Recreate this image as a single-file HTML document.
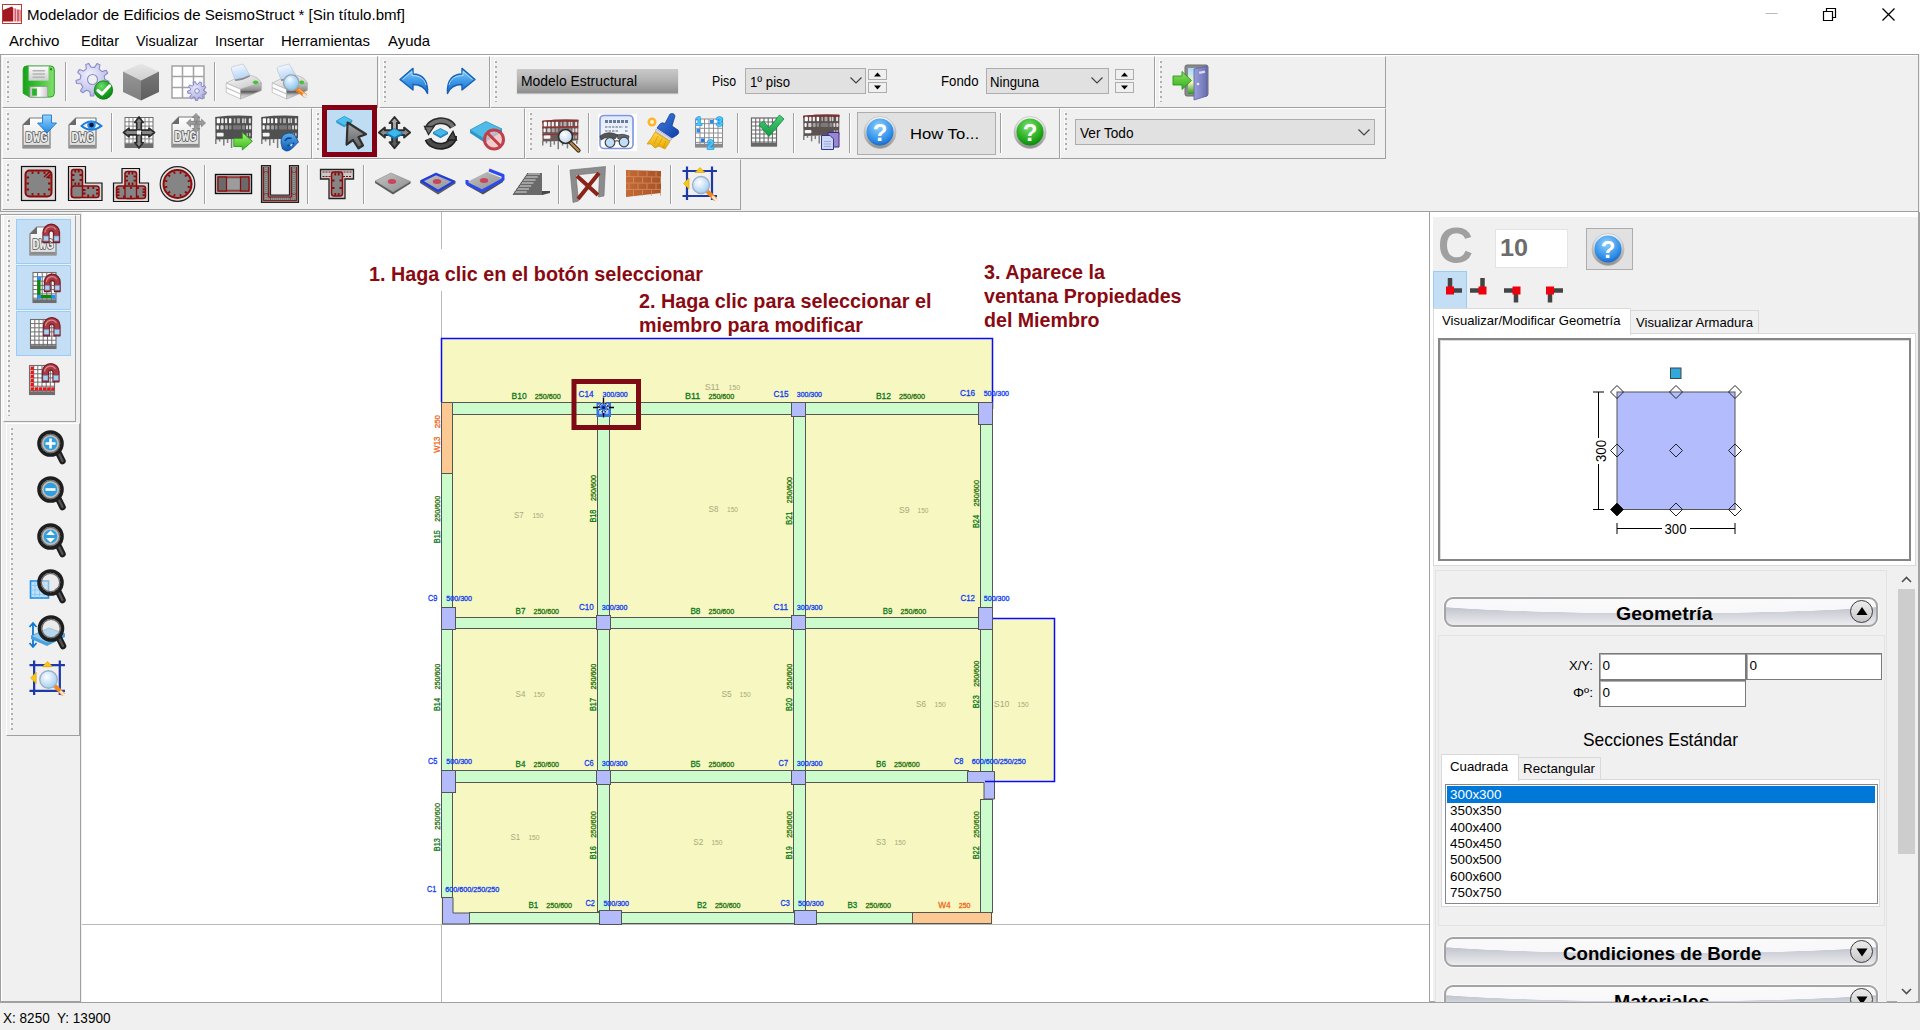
<!DOCTYPE html>
<html lang="es"><head><meta charset="utf-8"><title>Modelador de Edificios de SeismoStruct</title>
<style>
html,body{margin:0;padding:0;background:#f0f0f0;}
body{width:1920px;height:1030px;overflow:hidden;position:relative;font-family:"Liberation Sans",sans-serif;}
#app{position:absolute;left:0;top:0;width:1920px;height:1030px;overflow:hidden;background:#f0f0f0;}
.abs,.t,.band,.sep,.grip,.ico,.combo,.btn{position:absolute;}
.t{white-space:nowrap;line-height:1;transform-origin:0 50%;}
#titlebar{position:absolute;left:0;top:0;width:1920px;height:29px;background:#fff;}
#menubar{position:absolute;left:0;top:29px;width:1920px;height:25px;background:#fff;}
#dock{position:absolute;left:0;top:54px;width:1919px;box-shadow:inset 0 1px 0 #fff;height:158px;border-left:1px solid #a0a0a0;background:#f0f0f0;border-top:1px solid #a0a0a0;border-bottom:1px solid #a0a0a0;border-right:1px solid #a0a0a0;box-sizing:border-box;}
.band{box-sizing:border-box;border-right:1px solid #a0a0a0;border-bottom:1px solid #a0a0a0;border-top:1px solid #fff;border-left:1px solid #fff;background:#f0f0f0;}
.sep{width:1px;background:#a0a0a0;border-right:1px solid #fff;}
.grip{width:2px;background-image:repeating-linear-gradient(to bottom,#b0b0b0 0,#b0b0b0 2px,transparent 2px,transparent 5px);box-shadow:-1px -1px 0 rgba(255,255,255,.8);}
.ico{overflow:visible;}
.combo{box-sizing:border-box;background:#e1e1e1;border:1px solid #adadad;}
.btn{box-sizing:border-box;background:#e1e1e1;border:1px solid #adadad;}
.hl{position:absolute;box-sizing:border-box;background:#c4dff5;border:1px solid #98cdf8;}
.spin{position:absolute;box-sizing:border-box;background:#f0f0f0;border:1px solid #adadad;}
#leftdock{position:absolute;left:0;top:212px;width:82px;height:790px;background:#f0f0f0;}
#canvas{position:absolute;left:82px;top:212px;width:1347px;height:790px;background:#fff;}
#right{position:absolute;left:1429px;top:212px;width:491px;height:790px;background:#fff;box-sizing:border-box;border-left:1px solid #a0a0a0;border-right:2px solid #a4a4a4;border-bottom:1px solid #a8a8a8;}
#rightin{position:absolute;left:1433px;top:217px;width:485px;height:784px;background:#f0f0f0;}
#status{position:absolute;left:0;top:1002px;width:1920px;height:28px;background:#f0f0f0;border-top:1px solid #a0a0a0;box-sizing:border-box;}
.pill{position:absolute;box-sizing:border-box;border:2px solid #a4a4a4;border-radius:9px;background:radial-gradient(ellipse 62% 56% at 50% 0%,#fbfbfc 0,#f8f8fa 97%,rgba(248,248,250,0) 100%),linear-gradient(to bottom,#c9ccd4 0%,#bfc3cc 30%,#d6d8de 65%,#ececef 100%);box-shadow:0 0 0 1px #f8f8f8;}
.circ{position:absolute;box-sizing:border-box;width:23px;height:23px;border-radius:12px;border:1.5px solid #3c3c3c;background:linear-gradient(to bottom,#ececec 0%,#dcdcdc 50%,#c6c6c6 100%);}
.edit{position:absolute;box-sizing:border-box;background:#fff;border:1px solid #7a7a7a;box-shadow:inset 1px 1px 0 #b0b0b0;}
.tabp{position:absolute;box-sizing:border-box;background:#fff;border:1px solid #d9d9d9;}
.tabi{position:absolute;box-sizing:border-box;background:#f0f0f0;border:1px solid #d9d9d9;}
.tab {position:absolute;box-sizing:border-box;background:#fff;border:1px solid #d9d9d9;border-bottom:none;}
</style></head>
<body><div id="app">
<div id="titlebar">
<svg class="ico" style="left:2px;top:4px" width="20" height="20" viewBox="0 0 20 20"><rect x=".5" y=".5" width="19" height="19" fill="#fff" stroke="#b83a30"/><path d="M1 6L10 2.500L11 3.500V17.500H1Z" fill="#a11722"/><rect x="11" y="4" width="1.500" height="13.500" fill="#e8b0b4"/><rect x="12.500" y="4.500" width="1.500" height="13" fill="#d4606c"/><rect x="14" y="5" width="1" height="12.500" fill="#ecc0c4"/><rect x="15" y="5.500" width="2.500" height="12" fill="#d4606c"/><rect x="17.500" y="6" width="1.500" height="11.500" fill="#dc9096"/></svg>
<span class="t" style="left:27.0px;top:6.9px;font-size:15px;color:#000;transform:scaleX(1.0053);">Modelador de Edificios de SeismoStruct * [Sin título.bmf]</span>
<svg class="ico" style="left:1755px;top:0" width="165" height="29" viewBox="0 0 165 29"><path d="M10.5 13.5H22.5" stroke="#bbb" stroke-width="1"/><path d="M68.500 11.5H77.5V20.5H68.5Z M71.5 11.5V8.500H80.5V17.5H77.5" fill="none" stroke="#000" stroke-width="1.2"/><path d="M127.5 8.500L139.5 20.5M139.5 8.500L127.5 20.5" stroke="#000" stroke-width="1.3"/></svg>
</div>
<div id="menubar"></div><div class="abs" style="left:0;top:0;width:600px;height:54px">
<span class="t" style="left:9.0px;top:33.2px;font-size:15px;color:#000;transform:scaleX(1.0097);">Archivo</span>
<span class="t" style="left:81.0px;top:33.2px;font-size:15px;color:#000;transform:scaleX(0.9698);">Editar</span>
<span class="t" style="left:136.0px;top:33.2px;font-size:15px;color:#000;transform:scaleX(0.9575);">Visualizar</span>
<span class="t" style="left:215.0px;top:33.2px;font-size:15px;color:#000;transform:scaleX(0.9637);">Insertar</span>
<span class="t" style="left:281.0px;top:33.2px;font-size:15px;color:#000;transform:scaleX(0.9886);">Herramientas</span>
<span class="t" style="left:388.0px;top:33.2px;font-size:15px;color:#000;transform:scaleX(0.9939);">Ayuda</span>
</div>
<div id="dock"></div>
<div class="band" style="left:2px;top:56px;width:376px;height:52px"></div>
<div class="grip" style="left:7px;top:61px;height:41px"></div>
<div class="band" style="left:379px;top:56px;width:111px;height:52px"></div>
<div class="grip" style="left:384px;top:61px;height:41px"></div>
<div class="band" style="left:490px;top:56px;width:665px;height:52px"></div>
<div class="grip" style="left:495px;top:61px;height:41px"></div>
<div class="band" style="left:1155px;top:56px;width:231px;height:52px"></div>
<div class="grip" style="left:1160px;top:61px;height:41px"></div>
<div class="band" style="left:2px;top:108px;width:310px;height:51px"></div>
<div class="grip" style="left:7px;top:113px;height:40px"></div>
<div class="band" style="left:312px;top:108px;width:213px;height:51px"></div>
<div class="grip" style="left:317px;top:113px;height:40px"></div>
<div class="band" style="left:525px;top:108px;width:535px;height:51px"></div>
<div class="grip" style="left:530px;top:113px;height:40px"></div>
<div class="band" style="left:1060px;top:108px;width:326px;height:51px"></div>
<div class="grip" style="left:1065px;top:113px;height:40px"></div>
<div class="band" style="left:2px;top:159px;width:739px;height:51px"></div>
<div class="grip" style="left:7px;top:164px;height:40px"></div>
<svg class="ico" style="left:22px;top:65px" width="33.5" height="33" viewBox="0 0 35 35"><defs><linearGradient id="svg1" x1="0" y1="0" x2="1" y2="0"><stop offset="0" stop-color="#17a317"/><stop offset="0.5" stop-color="#3ec43a"/><stop offset="1" stop-color="#86de6e"/></linearGradient><linearGradient id="svg2" x1="0" y1="0" x2="0" y2="1"><stop offset="0" stop-color="#fdfdfd"/><stop offset="1" stop-color="#cfcfcf"/></linearGradient><linearGradient id="svg3" x1="0" y1="0" x2="1" y2="0"><stop offset="0" stop-color="#b9b9b9"/><stop offset="0.5" stop-color="#fff"/><stop offset="1" stop-color="#c9c9c9"/></linearGradient></defs><path d="M5 1H30Q34 1 34 5V30Q34 34 30 34H8L1 30V5Q1 1 5 1Z" fill="url(#svg1)" stroke="#1f9a1f" stroke-width="1"/><rect x="7" y="1.500" width="21" height="15" fill="url(#svg2)" stroke="#b8c8b8" stroke-width=".6"/><path d="M11 6H24M11 9.500H24M11 13H24" stroke="#b4b4b4" stroke-width="1.6"/><rect x="8" y="23" width="19" height="11" fill="url(#svg3)" stroke="#8a8a8a" stroke-width=".5"/><rect x="10.500" y="25" width="5" height="7.500" fill="#25b425"/><rect x="29.500" y="3.500" width="2" height="2" fill="#138a13"/></svg>
<svg class="ico" style="left:76px;top:63px" width="37" height="37" viewBox="0 0 37 37"><defs><radialGradient id="gc1" cx="0.4" cy="0.35" r="0.7"><stop offset="0" stop-color="#f0f0fc"/><stop offset="1" stop-color="#b4b4e4"/></radialGradient><radialGradient id="gc2" cx="0.4" cy="0.3" r="0.8"><stop offset="0" stop-color="#6fe06a"/><stop offset="0.6" stop-color="#18a020"/><stop offset="1" stop-color="#0b7f12"/></radialGradient></defs><path d="M28.8 16.5L32.9 18.2L32.3 21.3L27.8 21.3L25.9 24.4L28.0 28.4L25.5 30.3L22.1 27.4L18.6 28.6L17.7 33.0L14.5 32.9L13.8 28.5L10.4 27.2L6.8 29.8L4.5 27.8L6.7 23.9L4.9 20.7L0.5 20.5L0.0 17.4L4.2 15.9L4.9 12.3L1.7 9.3L3.3 6.6L7.5 8.1L10.3 5.8L9.8 1.4L12.7 0.4L15.0 4.3L18.6 4.4L21.0 0.6L23.9 1.8L23.2 6.2L25.9 8.6L30.2 7.3L31.7 10.0L28.2 12.9Z M21.5 16.5A5 5 0 1 0 11.5 16.5A5 5 0 1 0 21.5 16.5Z" fill="url(#gc1)" stroke="#8a8acc" stroke-width="1.1" fill-rule="evenodd" stroke-linejoin="round"/><circle cx="27.500" cy="27" r="9.200" fill="url(#gc2)" stroke="#0a7a10" stroke-width=".8"/><path d="M22 27.500L26 31L33.500 23" fill="none" stroke="#fff" stroke-width="3.200" stroke-linecap="round" stroke-linejoin="round"/></svg>
<svg class="ico" style="left:122px;top:63px" width="38" height="38" viewBox="0 0 38 38"><defs><linearGradient id="cb1" x1="0" y1="0" x2="0" y2="1"><stop offset="0" stop-color="#e6e6e6"/><stop offset="1" stop-color="#d0d0d0"/></linearGradient><linearGradient id="cb2" x1="0" y1="0" x2="0" y2="1"><stop offset="0" stop-color="#969696"/><stop offset="1" stop-color="#7e7e7e"/></linearGradient><linearGradient id="cb3" x1="0" y1="0" x2="0" y2="1"><stop offset="0" stop-color="#787878"/><stop offset="1" stop-color="#5e5e5e"/></linearGradient></defs><path d="M19 0.500L37 8.500L19 17.500L1 8.500Z" fill="url(#cb1)"/><path d="M1 8.500L19 17.500V37.500L1 29Z" fill="url(#cb2)"/><path d="M37 8.500L19 17.500V37.500L37 29Z" fill="url(#cb3)"/></svg>
<svg class="ico" style="left:170px;top:64px" width="37" height="37" viewBox="0 0 37 37"><defs><linearGradient id="gg1" x1="0" y1="0" x2="1" y2="1"><stop offset="0" stop-color="#ffffff"/><stop offset="0.6" stop-color="#ffffff"/><stop offset="1" stop-color="#d6d6fb"/></linearGradient><radialGradient id="gg2" cx="0.4" cy="0.35" r="0.7"><stop offset="0" stop-color="#e6e6fa"/><stop offset="1" stop-color="#a9a9dc"/></radialGradient></defs><rect x="2" y="2" width="32" height="32" fill="url(#gg1)" stroke="#a2a2a2" stroke-width="1.500"/><path d="M12.500 2V34M23.500 2V34M2 12.500H34M2 23.500H34" stroke="#a2a2a2" stroke-width="1.500"/><path d="M33.8 27.0L36.4 28.0L35.9 30.2L33.1 30.0L32.2 31.4L33.6 33.8L31.8 35.2L29.8 33.2L28.2 33.7L27.7 36.5L25.4 36.4L25.1 33.5L23.6 32.9L21.4 34.7L19.7 33.1L21.4 30.8L20.6 29.3L17.8 29.3L17.5 27.0L20.2 26.3L20.6 24.7L18.5 22.8L19.7 20.9L22.3 22.1L23.6 21.1L23.1 18.3L25.4 17.6L26.5 20.2L28.2 20.3L29.6 17.9L31.7 18.8L31.0 21.5L32.2 22.6L34.9 21.7L35.9 23.8L33.6 25.4Z M29.3 27.0A2.3 2.3 0 1 0 24.7 27.0A2.3 2.3 0 1 0 29.3 27.0Z" fill="url(#gg2)" stroke="#7f7fc4" stroke-width="0.9" fill-rule="evenodd" stroke-linejoin="round"/></svg>
<svg class="ico" style="left:225px;top:63px" width="38" height="38" viewBox="0 0 38 38"><defs><linearGradient id="paa" x1="0" y1="0" x2="0.3" y2="1"><stop offset="0" stop-color="#ffffff"/><stop offset="1" stop-color="#b4d4f8"/></linearGradient><linearGradient id="pba" x1="0" y1="0" x2="1" y2="1"><stop offset="0" stop-color="#fbfbfb"/><stop offset="1" stop-color="#c2c2c2"/></linearGradient><linearGradient id="pca" x1="0" y1="0" x2="0" y2="1"><stop offset="0" stop-color="#c9c9c9"/><stop offset="0.45" stop-color="#8d8d8d"/><stop offset="0.55" stop-color="#5a5a5a"/><stop offset="0.75" stop-color="#bdbdbd"/><stop offset="1" stop-color="#e4e4e4"/></linearGradient></defs><path d="M1.200 20L10.600 15.600L25 12.200Q34 14 36.300 20L15.600 26.300Z" fill="url(#pba)" stroke="#b4b4b4" stroke-width=".7"/><path d="M1.200 20L15.600 26.300V36L1.200 29.400Z" fill="#fdfdfd" stroke="#b4b4b4" stroke-width=".7"/><path d="M1.200 24.600L15.600 31" stroke="#c4c4c4" stroke-width="1.200"/><path d="M15.600 26.300L36.300 20V27.500L15.600 36Z" fill="url(#pca)" stroke="#a8a8a8" stroke-width=".7"/><path d="M10 16.800L6.500 7Q5.500 4 8 3.600L18 1Q21 5 24.700 12Q18 16 10 16.800Z" fill="url(#paa)" stroke="#b9c6d6" stroke-width=".7"/><path d="M9.800 16.500Q17 16 24.500 12.300L25 13.500Q18 17.500 10.200 18Z" fill="#8a8a8a"/><ellipse cx="30.600" cy="19.300" rx="2.700" ry="1.900" fill="#45c23a"/></svg>
<svg class="ico" style="left:271px;top:63px" width="38" height="38" viewBox="0 0 38 38"><defs><linearGradient id="pab" x1="0" y1="0" x2="0.3" y2="1"><stop offset="0" stop-color="#ffffff"/><stop offset="1" stop-color="#b4d4f8"/></linearGradient><linearGradient id="pbb" x1="0" y1="0" x2="1" y2="1"><stop offset="0" stop-color="#fbfbfb"/><stop offset="1" stop-color="#c2c2c2"/></linearGradient><linearGradient id="pcb" x1="0" y1="0" x2="0" y2="1"><stop offset="0" stop-color="#c9c9c9"/><stop offset="0.45" stop-color="#8d8d8d"/><stop offset="0.55" stop-color="#5a5a5a"/><stop offset="0.75" stop-color="#bdbdbd"/><stop offset="1" stop-color="#e4e4e4"/></linearGradient></defs><path d="M1.200 20L10.600 15.600L25 12.200Q34 14 36.300 20L15.600 26.300Z" fill="url(#pbb)" stroke="#b4b4b4" stroke-width=".7"/><path d="M1.200 20L15.600 26.300V36L1.200 29.400Z" fill="#fdfdfd" stroke="#b4b4b4" stroke-width=".7"/><path d="M1.200 24.600L15.600 31" stroke="#c4c4c4" stroke-width="1.200"/><path d="M15.600 26.300L36.300 20V27.500L15.600 36Z" fill="url(#pcb)" stroke="#a8a8a8" stroke-width=".7"/><path d="M10 16.800L6.500 7Q5.500 4 8 3.600L18 1Q21 5 24.700 12Q18 16 10 16.800Z" fill="url(#pab)" stroke="#b9c6d6" stroke-width=".7"/><path d="M9.800 16.500Q17 16 24.500 12.300L25 13.500Q18 17.500 10.200 18Z" fill="#8a8a8a"/><ellipse cx="30.600" cy="19.300" rx="2.700" ry="1.900" fill="#45c23a"/><defs><radialGradient id="pp1" cx="0.4" cy="0.3" r="0.75"><stop offset="0" stop-color="#f2faff"/><stop offset="0.5" stop-color="#b4dcf6"/><stop offset="1" stop-color="#84bce6"/></radialGradient></defs><path d="M26.500 26.500L34 32.500" stroke="#f07e1c" stroke-width="4.200" stroke-linecap="round"/><path d="M28 26.500L34.500 31.500" stroke="#fbb860" stroke-width="1.300" stroke-linecap="round"/><path d="M33 32L35.500 34" stroke="#e8e8e8" stroke-width="3" stroke-linecap="round"/><circle cx="20.300" cy="19.700" r="7.800" fill="url(#pp1)" stroke="#9aa4ae" stroke-width="1.300"/></svg>
<svg class="ico" style="left:398px;top:66px" width="32" height="29" viewBox="0 0 32 29"><defs><linearGradient id="un1" x1="0" y1="0" x2="0" y2="1"><stop offset="0" stop-color="#8fd0fa"/><stop offset="0.5" stop-color="#3f9ae8"/><stop offset="1" stop-color="#1668c8"/></linearGradient></defs><path d="M2 13.500L15 2.400V8C23 8 30.500 13 29.500 27.500C27 21 22 18.500 15 18.500V24Z" fill="url(#un1)" stroke="#1560b8" stroke-width="1.400" stroke-linejoin="round"/><path d="M4.500 13.500L14 5.500V9.500C21 9.500 26.500 12.500 28 19" fill="none" stroke="#bfe4fc" stroke-width="1" opacity=".8"/></svg>
<svg class="ico" style="left:445px;top:66px" width="32" height="29" viewBox="0 0 32 29"><g transform="translate(32,0) scale(-1,1)"><defs><linearGradient id="re1" x1="0" y1="0" x2="0" y2="1"><stop offset="0" stop-color="#8fd0fa"/><stop offset="0.5" stop-color="#3f9ae8"/><stop offset="1" stop-color="#1668c8"/></linearGradient></defs><path d="M2 13.500L15 2.400V8C23 8 30.500 13 29.500 27.500C27 21 22 18.500 15 18.500V24Z" fill="url(#re1)" stroke="#1560b8" stroke-width="1.400" stroke-linejoin="round"/><path d="M4.500 13.500L14 5.500V9.500C21 9.500 26.500 12.500 28 19" fill="none" stroke="#bfe4fc" stroke-width="1" opacity=".8"/></g></svg>
<svg class="ico" style="left:1172px;top:63px" width="38" height="38" viewBox="0 0 38 38"><defs><linearGradient id="ex1" x1="0" y1="0" x2="1" y2="0"><stop offset="0" stop-color="#9aa0d8"/><stop offset="1" stop-color="#6a6fb5"/></linearGradient><linearGradient id="ex2" x1="0" y1="0" x2="0" y2="1"><stop offset="0" stop-color="#8fe060"/><stop offset="1" stop-color="#2fae1c"/></linearGradient><linearGradient id="ex3" x1="0" y1="0" x2="0" y2="1"><stop offset="0" stop-color="#a6d8ff"/><stop offset="0.55" stop-color="#f4f8c0"/><stop offset="1" stop-color="#2f9a20"/></linearGradient></defs><rect x="13" y="2" width="23" height="31" rx="2" fill="#8a8a8a" stroke="#6e6e6e"/><rect x="16" y="5" width="10" height="26" fill="url(#ex3)"/><path d="M22 6L35 3V33L22 37Z" fill="url(#ex1)" stroke="#5a5fa5" stroke-width=".8"/><rect x="27" y="8" width="6" height="2.500" fill="#d8daf4" transform="rotate(-12 30 9)"/><circle cx="26" cy="21" r="1.300" fill="#e8e8ff"/><path d="M1 13H10V8.500L19.500 17.500L10 26.500V22H1Z" fill="url(#ex2)" stroke="#27961a" stroke-width=".9" stroke-linejoin="round"/></svg>
<div class="sep" style="left:65px;top:62px;height:39px"></div>
<div class="sep" style="left:214px;top:62px;height:39px"></div>
<div class="abs" style="left:517px;top:69px;width:161px;height:24px;background:linear-gradient(to bottom,#c9c9c9 0%,#b4b4b4 45%,#8e8e8e 100%);box-shadow:0 1px 1px #bbb"></div>
<span class="t" style="left:521.0px;top:73.6px;font-size:14px;color:#000;transform:scaleX(0.9939);">Modelo Estructural</span>
<span class="t" style="left:711.5px;top:74.1px;font-size:14px;color:#000;transform:scaleX(0.8812);">Piso</span>
<div class="combo" style="left:745px;top:68px;width:121px;height:26px"></div>
<span class="t" style="left:750.0px;top:75.1px;font-size:14px;color:#000;transform:scaleX(0.9418);">1º piso</span>
<svg class="ico" style="left:849px;top:76px" width="14" height="9" viewBox="0 0 14 9"><path d="M1.5 1.5L7 7L12.5 1.5" fill="none" stroke="#444" stroke-width="1.2"/></svg>
<div class="spin" style="left:868px;top:69px;width:19px;height:11px"></div><div class="spin" style="left:868px;top:82px;width:19px;height:11px"></div>
<svg class="ico" style="left:868px;top:69px" width="19" height="24" viewBox="0 0 19 24"><path d="M6 7.500L9.500 3.500L13 7.500Z M6 16.5L9.500 20.5L13 16.5Z" fill="#000"/></svg>
<span class="t" style="left:940.5px;top:74.1px;font-size:14px;color:#000;transform:scaleX(0.9448);">Fondo</span>
<div class="combo" style="left:986px;top:68px;width:123px;height:26px"></div>
<span class="t" style="left:990.0px;top:75.1px;font-size:14px;color:#000;transform:scaleX(0.9396);">Ninguna</span>
<svg class="ico" style="left:1090px;top:76px" width="14" height="9" viewBox="0 0 14 9"><path d="M1.5 1.5L7 7L12.5 1.5" fill="none" stroke="#444" stroke-width="1.2"/></svg>
<div class="spin" style="left:1115px;top:69px;width:19px;height:11px"></div><div class="spin" style="left:1115px;top:82px;width:19px;height:11px"></div>
<svg class="ico" style="left:1115px;top:69px" width="19" height="24" viewBox="0 0 19 24"><path d="M6 7.500L9.500 3.500L13 7.500Z M6 16.5L9.500 20.5L13 16.5Z" fill="#000"/></svg>
<svg class="ico" style="left:22px;top:114px" width="36" height="36" viewBox="0 0 36 36"><defs><linearGradient id="dwa" x1="0" y1="0" x2="0" y2="1"><stop offset="0" stop-color="#ffffff"/><stop offset="1" stop-color="#dcdcdc"/></linearGradient></defs><path d="M8 4H28V34H1V11Z" fill="url(#dwa)" stroke="#7a7a7a" stroke-width="1.200" stroke-linejoin="round"/><path d="M1 11L8 4V11Z" fill="#6a6a6a"/><path d="M1.6 32.3H27.4" stroke="#8c8c8c" stroke-width="2.800"/><text x="3.2" y="28" font-family="Liberation Mono, monospace" font-weight="bold" font-size="14" fill="#ececec" stroke="#555" stroke-width="1.500" paint-order="stroke" stroke-linejoin="round" textLength="22.5" lengthAdjust="spacingAndGlyphs">DWG</text><defs><linearGradient id="di1" x1="0" y1="0" x2="0" y2="1"><stop offset="0" stop-color="#9ad4fc"/><stop offset="1" stop-color="#1e88e5"/></linearGradient></defs><path d="M20.500 1H29.500V9H34.500L25 19L15.500 9H20.500Z" fill="url(#di1)" stroke="#1a78d0" stroke-width=".9" stroke-linejoin="round"/></svg>
<svg class="ico" style="left:68px;top:114px" width="36" height="36" viewBox="0 0 36 36"><defs><linearGradient id="dwb" x1="0" y1="0" x2="0" y2="1"><stop offset="0" stop-color="#ffffff"/><stop offset="1" stop-color="#dcdcdc"/></linearGradient></defs><path d="M8 4H28V34H1V11Z" fill="url(#dwb)" stroke="#7a7a7a" stroke-width="1.200" stroke-linejoin="round"/><path d="M1 11L8 4V11Z" fill="#6a6a6a"/><path d="M1.6 32.3H27.4" stroke="#8c8c8c" stroke-width="2.800"/><text x="3.2" y="28" font-family="Liberation Mono, monospace" font-weight="bold" font-size="14" fill="#ececec" stroke="#555" stroke-width="1.500" paint-order="stroke" stroke-linejoin="round" textLength="22.5" lengthAdjust="spacingAndGlyphs">DWG</text><path d="M13.500 12Q23 3 33.500 12Q23 19.500 13.500 12Z" fill="#eaf4ff" stroke="#1e7ad8" stroke-width="1.800"/><circle cx="23.500" cy="11" r="4.300" fill="#2a8de8"/><circle cx="23.500" cy="11" r="2.300" fill="#08153a"/></svg>
<svg class="ico" style="left:122px;top:115px" width="35" height="35" viewBox="0 0 35 35"><rect x="3" y="2.500" width="28" height="30" fill="#fff" stroke="#6e6e6e" stroke-width="1"/><path d="M7.0 2.500V32.500M11.0 2.500V32.500M15.0 2.500V32.500M19.0 2.500V32.500M23.0 2.500V32.500M27.0 2.500V32.500M3 6.8H31M3 11.1H31M3 15.3H31M3 19.6H31M3 23.9H31M3 28.2H31" stroke="#777" stroke-width=".9"/><path d="M3 30.500H31" stroke="#6e6e6e" stroke-width="4"/><path transform="rotate(0 17 17.5)" d="M14.7 17.5V7.5H12.8L17 2.0L21.2 7.5H19.3V17.5Z" fill="#868686" stroke="#2c2c2c" stroke-width="1.7" stroke-linejoin="round"/><path transform="rotate(90 17 17.5)" d="M14.7 17.5V7.5H12.8L17 2.0L21.2 7.5H19.3V17.5Z" fill="#868686" stroke="#2c2c2c" stroke-width="1.7" stroke-linejoin="round"/><path transform="rotate(180 17 17.5)" d="M14.7 17.5V7.5H12.8L17 2.0L21.2 7.5H19.3V17.5Z" fill="#868686" stroke="#2c2c2c" stroke-width="1.7" stroke-linejoin="round"/><path transform="rotate(270 17 17.5)" d="M14.7 17.5V7.5H12.8L17 2.0L21.2 7.5H19.3V17.5Z" fill="#868686" stroke="#2c2c2c" stroke-width="1.7" stroke-linejoin="round"/><rect x="15" y="15.500" width="4" height="4" fill="#f4f4f4"/></svg>
<svg class="ico" style="left:171px;top:113px" width="36" height="36" viewBox="0 0 36 36"><defs><linearGradient id="dwc" x1="0" y1="0" x2="0" y2="1"><stop offset="0" stop-color="#ffffff"/><stop offset="1" stop-color="#dcdcdc"/></linearGradient></defs><path d="M8 4H28V34H1V11Z" fill="url(#dwc)" stroke="#7a7a7a" stroke-width="1.200" stroke-linejoin="round"/><path d="M1 11L8 4V11Z" fill="#6a6a6a"/><path d="M1.6 32.3H27.4" stroke="#8c8c8c" stroke-width="2.800"/><text x="3.2" y="28" font-family="Liberation Mono, monospace" font-weight="bold" font-size="14" fill="#ececec" stroke="#555" stroke-width="1.500" paint-order="stroke" stroke-linejoin="round" textLength="22.5" lengthAdjust="spacingAndGlyphs">DWG</text><path transform="rotate(0 25 10)" d="M23.3 10V4.5H21.2L25 0.5L28.8 4.5H26.7V10Z" fill="#9a9a9a" stroke="#7a7a7a" stroke-width="0.7" stroke-linejoin="round"/><path transform="rotate(90 25 10)" d="M23.3 10V4.5H21.2L25 0.5L28.8 4.5H26.7V10Z" fill="#9a9a9a" stroke="#7a7a7a" stroke-width="0.7" stroke-linejoin="round"/><path transform="rotate(180 25 10)" d="M23.3 10V4.5H21.2L25 0.5L28.8 4.5H26.7V10Z" fill="#9a9a9a" stroke="#7a7a7a" stroke-width="0.7" stroke-linejoin="round"/><path transform="rotate(270 25 10)" d="M23.3 10V4.5H21.2L25 0.5L28.8 4.5H26.7V10Z" fill="#9a9a9a" stroke="#7a7a7a" stroke-width="0.7" stroke-linejoin="round"/></svg>
<svg class="ico" style="left:214px;top:114px" width="39" height="37" viewBox="0 0 39 37"><path d="M1.200 3Q20 0.800 38.200 2L38 24.500L1.500 25.500Z" fill="#505050"/><rect x="2.8" y="4.200" width="3.2" height="5" rx=".8" fill="#fff" opacity="1"/><rect x="7.2" y="4.200" width="2.4" height="5" rx=".8" fill="#fff" opacity="0.9"/><rect x="11" y="4.200" width="2.2" height="5" rx=".8" fill="#fff" opacity="0.9"/><rect x="15" y="4.200" width="2.4" height="5" rx=".8" fill="#fff" opacity="1"/><rect x="19.8" y="4.200" width="1.6" height="5" rx=".8" fill="#fff" opacity="0.55"/><rect x="23" y="4.200" width="3" height="5" rx=".8" fill="#fff" opacity="0.5"/><rect x="28" y="4.200" width="1.8" height="5" rx=".8" fill="#fff" opacity="0.7"/><rect x="30.5" y="4.200" width="1.6" height="5" rx=".8" fill="#fff" opacity="0.75"/><rect x="34.8" y="4.200" width="2" height="5" rx=".8" fill="#fff" opacity="0.85"/><rect x="2.6" y="11.200" width="2.2" height="4.300" rx=".8" fill="#fff" opacity="1"/><rect x="6.4" y="11.200" width="3.2" height="4.300" rx=".8" fill="#fff" opacity="0.75"/><rect x="11" y="11.200" width="3" height="4.300" rx=".8" fill="#fff" opacity="0.45"/><rect x="15" y="11.200" width="2.5" height="4.300" rx=".8" fill="#fff" opacity="0.35"/><rect x="19" y="11.200" width="8" height="4.300" rx=".8" fill="#fff" opacity="0.22"/><rect x="28" y="11.200" width="3" height="4.300" rx=".8" fill="#fff" opacity="0.3"/><rect x="32" y="11.200" width="2" height="4.300" rx=".8" fill="#fff" opacity="0.75"/><rect x="35" y="11.200" width="2.2" height="4.300" rx=".8" fill="#fff" opacity="0.8"/><rect x="2.8" y="18.800" width="6.8" height="3.800" rx=".8" fill="#fff" opacity="0.95"/><rect x="32.5" y="18.800" width="1.5" height="3.800" rx=".8" fill="#fff" opacity="0.5"/><rect x="35" y="18.800" width="1.6" height="3.800" rx=".8" fill="#fff" opacity="0.6"/><path d="M1.8 25V30" stroke="#6a6a6a" stroke-width="1.500" opacity=".85"/><path d="M5.6 25V27.5" stroke="#6a6a6a" stroke-width="1.500" opacity=".85"/><path d="M9.8 25V31.5" stroke="#6a6a6a" stroke-width="1.500" opacity=".85"/><path d="M13.6 25V29" stroke="#6a6a6a" stroke-width="1.500" opacity=".85"/><path d="M17.6 25V34" stroke="#6a6a6a" stroke-width="1.500" opacity=".85"/><path d="M22 25V30" stroke="#6a6a6a" stroke-width="1.500" opacity=".85"/><path d="M27 25V33" stroke="#6a6a6a" stroke-width="1.500" opacity=".85"/><path d="M31 25V29" stroke="#6a6a6a" stroke-width="1.500" opacity=".85"/><path d="M36.5 25V28" stroke="#6a6a6a" stroke-width="1.500" opacity=".85"/><defs><linearGradient id="ba1" x1="0" y1="0" x2="0" y2="1"><stop offset="0" stop-color="#a4f470"/><stop offset="1" stop-color="#35b81c"/></linearGradient></defs><path d="M19.800 24.500H28.300V18.500L38.400 27.300L28.300 36V32.500H19.800Z" fill="url(#ba1)" stroke="#28a018" stroke-width=".9" stroke-linejoin="round"/></svg>
<svg class="ico" style="left:260px;top:114px" width="40" height="38" viewBox="0 0 40 38"><path d="M1.200 3Q20 0.800 38.200 2L38 24.500L1.500 25.500Z" fill="#505050"/><rect x="2.8" y="4.200" width="3.2" height="5" rx=".8" fill="#fff" opacity="1"/><rect x="7.2" y="4.200" width="2.4" height="5" rx=".8" fill="#fff" opacity="0.9"/><rect x="11" y="4.200" width="2.2" height="5" rx=".8" fill="#fff" opacity="0.9"/><rect x="15" y="4.200" width="2.4" height="5" rx=".8" fill="#fff" opacity="1"/><rect x="19.8" y="4.200" width="1.6" height="5" rx=".8" fill="#fff" opacity="0.55"/><rect x="23" y="4.200" width="3" height="5" rx=".8" fill="#fff" opacity="0.5"/><rect x="28" y="4.200" width="1.8" height="5" rx=".8" fill="#fff" opacity="0.7"/><rect x="30.5" y="4.200" width="1.6" height="5" rx=".8" fill="#fff" opacity="0.75"/><rect x="34.8" y="4.200" width="2" height="5" rx=".8" fill="#fff" opacity="0.85"/><rect x="2.6" y="11.200" width="2.2" height="4.300" rx=".8" fill="#fff" opacity="1"/><rect x="6.4" y="11.200" width="3.2" height="4.300" rx=".8" fill="#fff" opacity="0.75"/><rect x="11" y="11.200" width="3" height="4.300" rx=".8" fill="#fff" opacity="0.45"/><rect x="15" y="11.200" width="2.5" height="4.300" rx=".8" fill="#fff" opacity="0.35"/><rect x="19" y="11.200" width="8" height="4.300" rx=".8" fill="#fff" opacity="0.22"/><rect x="28" y="11.200" width="3" height="4.300" rx=".8" fill="#fff" opacity="0.3"/><rect x="32" y="11.200" width="2" height="4.300" rx=".8" fill="#fff" opacity="0.75"/><rect x="35" y="11.200" width="2.2" height="4.300" rx=".8" fill="#fff" opacity="0.8"/><rect x="2.8" y="18.800" width="6.8" height="3.800" rx=".8" fill="#fff" opacity="0.95"/><rect x="32.5" y="18.800" width="1.5" height="3.800" rx=".8" fill="#fff" opacity="0.5"/><rect x="35" y="18.800" width="1.6" height="3.800" rx=".8" fill="#fff" opacity="0.6"/><path d="M1.8 25V30" stroke="#6a6a6a" stroke-width="1.500" opacity=".85"/><path d="M5.6 25V27.5" stroke="#6a6a6a" stroke-width="1.500" opacity=".85"/><path d="M9.8 25V31.5" stroke="#6a6a6a" stroke-width="1.500" opacity=".85"/><path d="M13.6 25V29" stroke="#6a6a6a" stroke-width="1.500" opacity=".85"/><path d="M17.6 25V34" stroke="#6a6a6a" stroke-width="1.500" opacity=".85"/><path d="M22 25V30" stroke="#6a6a6a" stroke-width="1.500" opacity=".85"/><path d="M27 25V33" stroke="#6a6a6a" stroke-width="1.500" opacity=".85"/><path d="M31 25V29" stroke="#6a6a6a" stroke-width="1.500" opacity=".85"/><path d="M36.5 25V28" stroke="#6a6a6a" stroke-width="1.500" opacity=".85"/><defs><linearGradient id="br1" x1="0" y1="0" x2="0" y2="1"><stop offset="0" stop-color="#5ab0f0"/><stop offset="1" stop-color="#0d58b0"/></linearGradient></defs><path d="M21 29Q20 20 29 19Q35 19 36.500 24.500L38.500 28L35.500 31Q30 37.500 26 37L22.500 35Z" fill="url(#br1)" stroke="#0c4a9c" stroke-width=".8"/><path d="M25 27Q27 23 31.500 24.500M34 29Q31 32 27.500 31.500" fill="none" stroke="#0a3f8a" stroke-width="1.600"/><path d="M29.500 31L33 29.500L31.500 32.500Z" fill="#d8ecff"/></svg>
<svg class="ico" style="left:378px;top:116px" width="33" height="34" viewBox="0 0 33 34"><path transform="rotate(0 16.5 16.6)" d="M14.1 16.6V7.000000000000002H11.5L16.5 1.0000000000000018L21.5 7.000000000000002H18.9V16.6Z" fill="#a8a8a8" stroke="#2e2e2e" stroke-width="1.9" stroke-linejoin="round"/><path transform="rotate(90 16.5 16.6)" d="M14.1 16.6V7.000000000000002H11.5L16.5 1.0000000000000018L21.5 7.000000000000002H18.9V16.6Z" fill="#8a8a8a" stroke="#2e2e2e" stroke-width="1.9" stroke-linejoin="round"/><path transform="rotate(180 16.5 16.6)" d="M14.1 16.6V7.000000000000002H11.5L16.5 1.0000000000000018L21.5 7.000000000000002H18.9V16.6Z" fill="#5c5c5c" stroke="#2e2e2e" stroke-width="1.9" stroke-linejoin="round"/><path transform="rotate(270 16.5 16.6)" d="M14.1 16.6V7.000000000000002H11.5L16.5 1.0000000000000018L21.5 7.000000000000002H18.9V16.6Z" fill="#8a8a8a" stroke="#2e2e2e" stroke-width="1.9" stroke-linejoin="round"/><path d="M8.500 17L16.500 12.600L24.500 17L16.500 21.400Z" fill="#3cb8ee" stroke="#1a80b8" stroke-width=".8"/><path d="M8.500 17L16.500 21.400L24.500 17V18.800L16.500 23.400L8.500 18.800Z" fill="#1479ae"/></svg>
<svg class="ico" style="left:424px;top:116px" width="33" height="34" viewBox="0 0 33 34"><path d="M4 14A13 10 0 0 1 29 11" fill="none" stroke="#2a2a2a" stroke-width="7"/><path d="M4 14A13 10 0 0 1 29 11" fill="none" stroke="#727272" stroke-width="3.800"/><path d="M0.500 10.500L10 10.500L4.500 18.500Z" fill="#727272" stroke="#2a2a2a" stroke-width="1.300"/><path d="M29.500 20A13 10 0 0 1 4 23" fill="none" stroke="#1e1e1e" stroke-width="7"/><path d="M29.500 20A13 10 0 0 1 4 23" fill="none" stroke="#4a4a4a" stroke-width="3.800"/><path d="M32.500 24L23.500 24L29 15.500Z" fill="#4a4a4a" stroke="#1e1e1e" stroke-width="1.300"/><path d="M9 16.500L16.500 12.500L24 16.500L16.500 20.500Z" fill="#45b8ea" stroke="#1a80b8" stroke-width=".8"/><path d="M9 16.500L16.500 20.500L24 16.500V18L16.500 22.200L9 18Z" fill="#1e86bd"/></svg>
<svg class="ico" style="left:469px;top:120px" width="36" height="31" viewBox="0 0 36 31"><path d="M1 10L17 1.500L33 9L15.500 19Z" fill="#4fbbe8" stroke="#2a8fc0" stroke-width=".8"/><path d="M1 10L15.500 19L33 9V12L15.500 22.500L1 13Z" fill="#2f95c8"/><circle cx="25" cy="19.500" r="9.500" fill="#f2c0c0" fill-opacity=".75" stroke="#c0404a" stroke-width="3"/><path d="M18.500 13L31.500 26" stroke="#c0404a" stroke-width="3"/></svg>
<svg class="ico" style="left:541px;top:117px" width="40" height="36" viewBox="0 0 40 36"><g transform="translate(0,1) scale(.98,.92)"><path d="M1.200 3Q20 0.800 38.200 2L38 24.500L1.500 25.500Z" fill="#6a5a5a"/><path d="M1.200 3Q20 0.800 38.200 2V4.500Q20 3.300 1.200 5.500Z" fill="#8a3434"/><rect x="2.8" y="4.200" width="3.2" height="5" rx=".8" fill="#fff" opacity="1"/><rect x="7.2" y="4.200" width="2.4" height="5" rx=".8" fill="#fff" opacity="0.9"/><rect x="11" y="4.200" width="2.2" height="5" rx=".8" fill="#fff" opacity="0.9"/><rect x="15" y="4.200" width="2.4" height="5" rx=".8" fill="#fff" opacity="1"/><rect x="19.8" y="4.200" width="1.6" height="5" rx=".8" fill="#fff" opacity="0.55"/><rect x="23" y="4.200" width="3" height="5" rx=".8" fill="#fff" opacity="0.5"/><rect x="28" y="4.200" width="1.8" height="5" rx=".8" fill="#fff" opacity="0.7"/><rect x="30.5" y="4.200" width="1.6" height="5" rx=".8" fill="#fff" opacity="0.75"/><rect x="34.8" y="4.200" width="2" height="5" rx=".8" fill="#fff" opacity="0.85"/><rect x="2.6" y="11.200" width="2.2" height="4.300" rx=".8" fill="#fff" opacity="1"/><rect x="6.4" y="11.200" width="3.2" height="4.300" rx=".8" fill="#fff" opacity="0.75"/><rect x="11" y="11.200" width="3" height="4.300" rx=".8" fill="#fff" opacity="0.45"/><rect x="15" y="11.200" width="2.5" height="4.300" rx=".8" fill="#fff" opacity="0.35"/><rect x="19" y="11.200" width="8" height="4.300" rx=".8" fill="#fff" opacity="0.22"/><rect x="28" y="11.200" width="3" height="4.300" rx=".8" fill="#fff" opacity="0.3"/><rect x="32" y="11.200" width="2" height="4.300" rx=".8" fill="#fff" opacity="0.75"/><rect x="35" y="11.200" width="2.2" height="4.300" rx=".8" fill="#fff" opacity="0.8"/><rect x="2.8" y="18.800" width="6.8" height="3.800" rx=".8" fill="#fff" opacity="0.95"/><rect x="32.5" y="18.800" width="1.5" height="3.800" rx=".8" fill="#fff" opacity="0.5"/><rect x="35" y="18.800" width="1.6" height="3.800" rx=".8" fill="#fff" opacity="0.6"/><path d="M1.8 25V30" stroke="#6a6a6a" stroke-width="1.500" opacity=".85"/><path d="M5.6 25V27.5" stroke="#6a6a6a" stroke-width="1.500" opacity=".85"/><path d="M9.8 25V31.5" stroke="#6a6a6a" stroke-width="1.500" opacity=".85"/><path d="M13.6 25V29" stroke="#6a6a6a" stroke-width="1.500" opacity=".85"/><path d="M17.6 25V34" stroke="#6a6a6a" stroke-width="1.500" opacity=".85"/><path d="M22 25V30" stroke="#6a6a6a" stroke-width="1.500" opacity=".85"/><path d="M27 25V33" stroke="#6a6a6a" stroke-width="1.500" opacity=".85"/><path d="M31 25V29" stroke="#6a6a6a" stroke-width="1.500" opacity=".85"/><path d="M36.5 25V28" stroke="#6a6a6a" stroke-width="1.500" opacity=".85"/><path d="M1.300 10.500L38 9.500M1.400 18L38 17" stroke="#9a3030" stroke-width="1.400"/></g><defs><radialGradient id="bs1" cx="0.4" cy="0.35" r="0.7"><stop offset="0" stop-color="#ffffff"/><stop offset="1" stop-color="#bcd2e6"/></radialGradient></defs><path d="M29 25L37.500 33.500" stroke="#2a2a2a" stroke-width="4.200" stroke-linecap="round"/><path d="M30 26L37.500 33.500" stroke="#c08a3a" stroke-width="2.400" stroke-linecap="round"/><circle cx="24.500" cy="19.500" r="7" fill="url(#bs1)" stroke="#303030" stroke-width="1.700"/></svg>
<svg class="ico" style="left:598px;top:114px" width="39" height="37" viewBox="0 0 39 37"><rect x="0" y="0" width="39" height="37" fill="#fff"/><defs><linearGradient id="dg1" x1="0" y1="0" x2="0" y2="1"><stop offset="0" stop-color="#dfe9fb"/><stop offset="1" stop-color="#ffffff"/></linearGradient></defs><rect x="2" y="1.500" width="33" height="33" rx="4" fill="url(#dg1)" stroke="#7d95e0" stroke-width="1.600"/><path d="M7 7.500H30" stroke="#6a7a98" stroke-width="3.200" stroke-dasharray="3 1"/><path d="M7 13H25M27 13H30M7 17H20M27 17H30" stroke="#8a94a8" stroke-width="1.600" stroke-dasharray="2.500 1"/><path d="M2 22Q10 16 20 21L17 25Q10 21 3 26Z" fill="#555" stroke="#333" stroke-width=".7"/><path d="M19 21Q25 19 31 22L30 26Q25 23 20 25Z" fill="#666" stroke="#333" stroke-width=".7"/><circle cx="12" cy="28.500" r="4.800" fill="#bfdcf8" stroke="#444" stroke-width="1.200"/><circle cx="26" cy="28" r="4.800" fill="#bfdcf8" stroke="#444" stroke-width="1.200"/><path d="M16.500 27.500Q19 26 21.500 27.500" fill="none" stroke="#444" stroke-width="1.200"/></svg>
<svg class="ico" style="left:646px;top:113px" width="34" height="37" viewBox="0 0 34 37"><defs><linearGradient id="bm1" x1="0" y1="0" x2="0" y2="1"><stop offset="0" stop-color="#ffd84a"/><stop offset="1" stop-color="#e8a800"/></linearGradient><linearGradient id="bm2" x1="0" y1="0" x2="1" y2="1"><stop offset="0" stop-color="#3f7fe0"/><stop offset="1" stop-color="#0f3fa8"/></linearGradient></defs><path d="M24 1Q28 -0.500 29 3L26 13L32 17Q34 20 31 22L26 25L11 15L14 11Q16 9 19 10.500Z" fill="url(#bm2)" stroke="#0d3590" stroke-width=".7"/><path d="M10 16L26 26L24 28L9.500 18.500Z" fill="#d9d9e4" stroke="#9a9aae" stroke-width=".6"/><path d="M9 19L24 28.500L19 36L13 33L9 35L5 31L1 31Q6 25 9 19Z" fill="url(#bm1)" stroke="#d09400" stroke-width=".7"/><path d="M12 23L8 31M16 25.500L12 33M20 28L17 35" stroke="#d09a10" stroke-width=".8"/><circle cx="6" cy="9" r="4.500" fill="#ffb52a"/><circle cx="6" cy="9" r="2" fill="#fff6d8"/></svg>
<svg class="ico" style="left:694px;top:113px" width="34" height="37" viewBox="0 0 34 37"><rect x="1.500" y="6" width="27" height="28" fill="#fff" stroke="#8a8a8a" stroke-width="1"/><path d="M6.0 6V34M10.5 6V34M15.0 6V34M19.5 6V34M24.0 6V34M1.500 10.7H28.500M1.500 15.3H28.500M1.500 20.0H28.500M1.500 24.7H28.500M1.500 29.4H28.500" stroke="#8f8f8f" stroke-width="1"/><path d="M1.500 32.500H28.500" stroke="#8a8a8a" stroke-width="3.500"/><rect x="2.500" y="16" width="3.500" height="3.500" fill="#2a8cf0"/><rect x="7" y="25.500" width="3.500" height="3.500" fill="#1a78e8"/><rect x="16" y="7" width="3.500" height="3.500" fill="#2a8cf0"/><text x="1.5" y="12" font-family="Liberation Sans, sans-serif" font-weight="bold" font-size="11" fill="#5cc8f8" stroke="#18a0e8" stroke-width="1.600" paint-order="stroke">1</text><text x="22" y="12.5" font-family="Liberation Sans, sans-serif" font-weight="bold" font-size="12" fill="#5cc8f8" stroke="#18a0e8" stroke-width="1.600" paint-order="stroke">3</text><text x="13" y="36" font-family="Liberation Sans, sans-serif" font-weight="bold" font-size="12" fill="#5cc8f8" stroke="#18a0e8" stroke-width="1.600" paint-order="stroke">2</text></svg>
<svg class="ico" style="left:750px;top:114px" width="35" height="35" viewBox="0 0 35 35"><rect x="1.500" y="4" width="25" height="28" fill="#fff" stroke="#666" stroke-width="1.200"/><path d="M5.7 4V32M9.8 4V32M14.0 4V32M18.2 4V32M22.4 4V32M1.500 8.0H26.500M1.500 12.0H26.500M1.500 16.0H26.500M1.500 20.0H26.500M1.500 24.0H26.500M1.500 28.0H26.500" stroke="#6a6a6a" stroke-width="1.100"/><path d="M1.500 30.500H26.500" stroke="#666" stroke-width="3.500"/><defs><linearGradient id="cg1" x1="0" y1="0" x2="0" y2="1"><stop offset="0" stop-color="#4ccf7a"/><stop offset="1" stop-color="#119a42"/></linearGradient></defs><path d="M9 11L13.500 7L19 14L29.500 1L34 5L19 22.500Z" fill="url(#cg1)" stroke="#0f8a3a" stroke-width=".8" stroke-linejoin="round"/></svg>
<svg class="ico" style="left:802px;top:113px" width="40" height="37" viewBox="0 0 40 37"><g transform="scale(.98,.9)"><path d="M1.200 3Q20 0.800 38.200 2L38 24.500L1.500 25.500Z" fill="#5c5252"/><path d="M1.200 3Q20 0.800 38.200 2V4.500Q20 3.300 1.200 5.500Z" fill="#7e3030"/><rect x="2.8" y="4.200" width="3.2" height="5" rx=".8" fill="#fff" opacity="1"/><rect x="7.2" y="4.200" width="2.4" height="5" rx=".8" fill="#fff" opacity="0.9"/><rect x="11" y="4.200" width="2.2" height="5" rx=".8" fill="#fff" opacity="0.9"/><rect x="15" y="4.200" width="2.4" height="5" rx=".8" fill="#fff" opacity="1"/><rect x="19.8" y="4.200" width="1.6" height="5" rx=".8" fill="#fff" opacity="0.55"/><rect x="23" y="4.200" width="3" height="5" rx=".8" fill="#fff" opacity="0.5"/><rect x="28" y="4.200" width="1.8" height="5" rx=".8" fill="#fff" opacity="0.7"/><rect x="30.5" y="4.200" width="1.6" height="5" rx=".8" fill="#fff" opacity="0.75"/><rect x="34.8" y="4.200" width="2" height="5" rx=".8" fill="#fff" opacity="0.85"/><rect x="2.6" y="11.200" width="2.2" height="4.300" rx=".8" fill="#fff" opacity="1"/><rect x="6.4" y="11.200" width="3.2" height="4.300" rx=".8" fill="#fff" opacity="0.75"/><rect x="11" y="11.200" width="3" height="4.300" rx=".8" fill="#fff" opacity="0.45"/><rect x="15" y="11.200" width="2.5" height="4.300" rx=".8" fill="#fff" opacity="0.35"/><rect x="19" y="11.200" width="8" height="4.300" rx=".8" fill="#fff" opacity="0.22"/><rect x="28" y="11.200" width="3" height="4.300" rx=".8" fill="#fff" opacity="0.3"/><rect x="32" y="11.200" width="2" height="4.300" rx=".8" fill="#fff" opacity="0.75"/><rect x="35" y="11.200" width="2.2" height="4.300" rx=".8" fill="#fff" opacity="0.8"/><rect x="2.8" y="18.800" width="6.8" height="3.800" rx=".8" fill="#fff" opacity="0.95"/><rect x="32.5" y="18.800" width="1.5" height="3.800" rx=".8" fill="#fff" opacity="0.5"/><rect x="35" y="18.800" width="1.6" height="3.800" rx=".8" fill="#fff" opacity="0.6"/><path d="M1.8 25V30" stroke="#6a6a6a" stroke-width="1.500" opacity=".85"/><path d="M5.6 25V27.5" stroke="#6a6a6a" stroke-width="1.500" opacity=".85"/><path d="M9.8 25V31.5" stroke="#6a6a6a" stroke-width="1.500" opacity=".85"/><path d="M13.6 25V29" stroke="#6a6a6a" stroke-width="1.500" opacity=".85"/><path d="M17.6 25V34" stroke="#6a6a6a" stroke-width="1.500" opacity=".85"/><path d="M22 25V30" stroke="#6a6a6a" stroke-width="1.500" opacity=".85"/><path d="M27 25V33" stroke="#6a6a6a" stroke-width="1.500" opacity=".85"/><path d="M31 25V29" stroke="#6a6a6a" stroke-width="1.500" opacity=".85"/><path d="M36.5 25V28" stroke="#6a6a6a" stroke-width="1.500" opacity=".85"/></g><path d="M26 19.500H37V34H26Z" fill="#9a86d0" stroke="#3a2a80" stroke-width="1"/><path d="M19.500 22.500H28L31.500 26V36.500H19.500Z" fill="#ccd6f4" stroke="#2c3a90" stroke-width="1"/><path d="M22 28.500H29M22 31H29M22 33.500H29" stroke="#8fa0d8" stroke-width=".8"/></svg>
<svg class="ico" style="left:1013px;top:115px" width="34" height="35" viewBox="0 0 34 35"><defs><radialGradient id="hpg" cx="0.45" cy="0.3" r="0.75"><stop offset="0" stop-color="#7ee070"/><stop offset="0.7" stop-color="#1fa818"/><stop offset="1" stop-color="#0c7a0c"/></radialGradient><linearGradient id="hrg" x1="0" y1="0" x2="0" y2="1"><stop offset="0" stop-color="#fafafa"/><stop offset="1" stop-color="#8e8e8e"/></linearGradient></defs><circle cx="17" cy="17.500" r="16" fill="url(#hrg)" stroke="#b0b0b0" stroke-width=".6"/><circle cx="17" cy="17" r="13.500" fill="url(#hpg)"/><text x="17" y="25.500" font-family="Liberation Sans, sans-serif" font-weight="bold" font-size="24" text-anchor="middle" fill="#fff">?</text></svg>
<div class="sep" style="left:111px;top:113px;height:39px"></div>
<div class="sep" style="left:588px;top:113px;height:40px"></div>
<div class="sep" style="left:737px;top:113px;height:40px"></div>
<div class="sep" style="left:793px;top:113px;height:40px"></div>
<div class="sep" style="left:849px;top:113px;height:40px"></div>
<div class="sep" style="left:1000px;top:113px;height:40px"></div>
<div class="abs" style="left:322px;top:105px;width:55px;height:52px;box-sizing:border-box;border:5px solid #850012;background:#c0dcf3;box-shadow:inset 0 0 0 1px #b4e0fc"></div>
<svg class="ico" style="left:334px;top:114px" width="34" height="36" viewBox="0 0 34 36"><defs><linearGradient id="se1" x1="0" y1="0" x2="0" y2="1"><stop offset="0" stop-color="#a8a8a8"/><stop offset="1" stop-color="#5e5e5e"/></linearGradient></defs><path d="M2.300 7L10.300 2.300L18.200 6.500L10.200 11.500Z" fill="#4dc0f0" stroke="#2a94c8" stroke-width=".8"/><path d="M2.300 7L10.200 11.500L18.200 6.500V8.300L10.200 13.300L2.300 8.800Z" fill="#2f98cc"/><path d="M13.600 8.500L32 20.200L24.500 23L29 31.500L24.500 34.300L19 26L12.600 30.500Z" fill="url(#se1)" stroke="#303030" stroke-width="2.200" stroke-linejoin="round"/></svg>
<div class="btn" style="left:857px;top:112px;width:139px;height:43px"></div>
<svg class="ico" style="left:863px;top:115px" width="34" height="35" viewBox="0 0 34 35"><defs><radialGradient id="hpb" cx="0.45" cy="0.3" r="0.75"><stop offset="0" stop-color="#8fd0ff"/><stop offset="0.7" stop-color="#2f8ee8"/><stop offset="1" stop-color="#1560c0"/></radialGradient><linearGradient id="hrb" x1="0" y1="0" x2="0" y2="1"><stop offset="0" stop-color="#fafafa"/><stop offset="1" stop-color="#8e8e8e"/></linearGradient></defs><circle cx="17" cy="17.500" r="16" fill="url(#hrb)" stroke="#b0b0b0" stroke-width=".6"/><circle cx="17" cy="17" r="13.500" fill="url(#hpb)"/><text x="17" y="25.500" font-family="Liberation Sans, sans-serif" font-weight="bold" font-size="24" text-anchor="middle" fill="#fff">?</text></svg>
<span class="t" style="left:910.0px;top:125.8px;font-size:15px;color:#000;transform:scaleX(1.1085);">How To...</span>
<div class="combo" style="left:1075px;top:119px;width:300px;height:26px"></div>
<span class="t" style="left:1079.5px;top:126.1px;font-size:14px;color:#000;transform:scaleX(0.9726);">Ver Todo</span>
<svg class="ico" style="left:1357px;top:128px" width="14" height="9" viewBox="0 0 14 9"><path d="M1.5 1.5L7 7L12.5 1.5" fill="none" stroke="#444" stroke-width="1.2"/></svg>
<svg class="ico" style="left:20px;top:165px" width="37" height="38" viewBox="0 0 37 38"><rect x="1.500" y="1.500" width="34" height="34" fill="#d9d9d9" stroke="#111" stroke-width="1.200"/><rect x="5.500" y="5.500" width="26" height="26" rx="4" fill="#858585" stroke="#8f0a0a" stroke-width="2"/><path d="M12.5 6.5v2.500M12.5 30.5v-2.500M6.5 12.5h2.500M30.5 12.5h-2.500M18.5 6.5v2.500M18.5 30.5v-2.500M6.5 18.5h2.500M30.5 18.5h-2.500M24.5 6.5v2.500M24.5 30.5v-2.500M6.5 24.5h2.500M30.5 24.5h-2.500" stroke="#8f0a0a" stroke-width="1.800"/><path d="M24 12L30 6.500M26.500 13L31 9" stroke="#8f0a0a" stroke-width="1.600"/></svg>
<svg class="ico" style="left:67px;top:165px" width="36" height="38" viewBox="0 0 36 38"><path d="M1.500 1.500H18.500V18H35V35.500H1.500Z" fill="#d9d9d9" stroke="#111" stroke-width="1.200"/><rect x="4.500" y="4.500" width="11" height="28" rx="2.500" fill="#858585" stroke="#8f0a0a" stroke-width="1.600"/><rect x="4.500" y="21" width="27.500" height="11.500" rx="2.500" fill="#858585" stroke="#8f0a0a" stroke-width="1.600"/><path d="M15.500 21V32.500" stroke="#8f0a0a" stroke-width="1.400"/><path d="M8.3 5v2.500M8.3 20v-2.500M5 10.0h2.500M15 10.0h-2.500M11.7 5v2.500M11.7 20v-2.500M5 15.0h2.500M15 15.0h-2.500" stroke="#8f0a0a" stroke-width="1.800"/><path d="M21.2 21.5v2.500M21.2 32v-2.500M16 25.0h2.500M31.5 25.0h-2.500M26.3 21.5v2.500M26.3 32v-2.500M16 28.5h2.500M31.5 28.5h-2.500" stroke="#8f0a0a" stroke-width="1.800"/></svg>
<svg class="ico" style="left:112px;top:167px" width="38" height="36" viewBox="0 0 38 36"><path d="M10 1.500H27.500V16H36.500V34.500H1.500V16H10Z" fill="#d9d9d9" stroke="#111" stroke-width="1.200"/><rect x="13" y="4.500" width="11.500" height="27" rx="2.500" fill="#858585" stroke="#8f0a0a" stroke-width="1.600"/><rect x="4.500" y="19" width="29" height="12.500" rx="2.500" fill="#858585" stroke="#8f0a0a" stroke-width="1.600"/><path d="M13 19V31.500M24.500 19V31.500" stroke="#8f0a0a" stroke-width="1.300"/><path d="M17.0 5v2.500M17.0 18v-2.500M13.5 9.3h2.500M24 9.3h-2.500M20.5 5v2.500M20.5 18v-2.500M13.5 13.7h2.500M24 13.7h-2.500" stroke="#8f0a0a" stroke-width="1.800"/><path d="M12.0 19.5v2.500M12.0 31v-2.500M5 22.4h2.500M33 22.4h-2.500M19.0 19.5v2.500M19.0 31v-2.500M5 25.2h2.500M33 25.2h-2.500M26.0 19.5v2.500M26.0 31v-2.500M5 28.1h2.500M33 28.1h-2.500" stroke="#8f0a0a" stroke-width="1.800"/></svg>
<svg class="ico" style="left:159px;top:165px" width="37" height="38" viewBox="0 0 37 38"><circle cx="18.500" cy="19" r="17.300" fill="#dedede" stroke="#222" stroke-width="1.200"/><circle cx="18.500" cy="19" r="14" fill="#858585" stroke="#8f0a0a" stroke-width="2"/><path d="M31.1 22.4L28.7 21.7M27.7 28.2L26.0 26.5M21.9 31.6L21.2 29.2M15.1 31.6L15.8 29.2M9.3 28.2L11.0 26.5M5.9 22.4L8.3 21.7M5.9 15.6L8.3 16.3M9.3 9.8L11.0 11.5M15.1 6.4L15.8 8.8M21.9 6.4L21.2 8.8M27.7 9.8L26.0 11.5M31.1 15.6L28.7 16.3" stroke="#8f0a0a" stroke-width="1.800"/></svg>
<svg class="ico" style="left:214px;top:173px" width="39" height="22" viewBox="0 0 39 22"><rect x="1.500" y="1.500" width="36" height="19" fill="#cfcfcf" stroke="#111" stroke-width="1.400"/><rect x="4" y="4" width="31" height="14" fill="#8a8a8a" stroke="#8f0a0a" stroke-width="1.200"/><rect x="4" y="4" width="8.500" height="14" fill="#6a6a6a" stroke="#8f0a0a" stroke-width="1.200"/><rect x="26.500" y="4" width="8.500" height="14" fill="#6a6a6a" stroke="#8f0a0a" stroke-width="1.200"/><rect x="13.500" y="6" width="12" height="10" fill="#9c9c9c"/></svg>
<svg class="ico" style="left:260px;top:164px" width="40" height="40" viewBox="0 0 40 40"><path d="M1.500 1.500H10.500V31H29.500V1.500H38.500V38.500H1.500Z" fill="#7c7c7c" stroke="#222" stroke-width="1.200"/><path d="M3.500 3V36.500H36.500V3M8.500 3V33H31.500V3" fill="none" stroke="#8f0a0a" stroke-width="1" opacity=".85"/><path d="M3.500 8H8.500M3.500 30H8.500M31.500 8H36.500M31.500 30H36.500M10 33V36.500M30 33V36.500" stroke="#8f0a0a" stroke-width="1" opacity=".85"/><path d="M6 4V35H34V4" fill="none" stroke="#9a9a9a" stroke-width="1.500" stroke-dasharray="1 1"/></svg>
<svg class="ico" style="left:319px;top:168px" width="36" height="32" viewBox="0 0 36 32"><path d="M1.500 1.500H34.500V11H26V30.500H10V11H1.500Z" fill="#c9c9c9" stroke="#222" stroke-width="1.300"/><rect x="12.500" y="4" width="11" height="24" rx="2.500" fill="#858585" stroke="#8f0a0a" stroke-width="1.500"/><path d="M3.500 4H32.500M3.500 8.500H12M24 8.500H32.500" stroke="#8f0a0a" stroke-width="1" stroke-dasharray="2 1"/><path d="M16.3 5v2.500M16.3 27.5v-2.500M13 12.5h2.500M23 12.5h-2.500M19.7 5v2.500M19.7 27.5v-2.500M13 20.0h2.500M23 20.0h-2.500" stroke="#8f0a0a" stroke-width="1.800"/></svg>
<svg class="ico" style="left:374px;top:172px" width="38" height="23" viewBox="0 0 38 23"><defs><linearGradient id="sla" x1="0" y1="0" x2="1" y2="1"><stop offset="0" stop-color="#c4c4c4"/><stop offset="1" stop-color="#8e8e8e"/></linearGradient></defs><path d="M1 9L17 1L36.500 9.500L19 20Z" fill="url(#sla)" stroke="#8a8a8a" stroke-width=".6"/><path d="M1 9L19 20L36.500 9.500V11.500L19 22.500L1 11Z" fill="#5e5e5e"/><ellipse cx="18" cy="9.500" rx="4.200" ry="2.500" fill="#c8455a"/></svg>
<svg class="ico" style="left:419px;top:172px" width="39" height="23" viewBox="0 0 39 23"><defs><linearGradient id="slb" x1="0" y1="0" x2="1" y2="1"><stop offset="0" stop-color="#c4c4c4"/><stop offset="1" stop-color="#8e8e8e"/></linearGradient></defs><path d="M1 9L17 1L36.500 9.500L19 20Z" fill="url(#slb)" stroke="#8a8a8a" stroke-width=".6"/><path d="M1 9L19 20L36.500 9.500V11.500L19 22.500L1 11Z" fill="#5e5e5e"/><path d="M2.500 9L17 2L35 9.500L19 19Z" fill="none" stroke="#1f3de0" stroke-width="2.400" stroke-linejoin="round"/><ellipse cx="18" cy="9.500" rx="4.200" ry="2.500" fill="#c8455a"/></svg>
<svg class="ico" style="left:465px;top:167px" width="40" height="28" viewBox="0 0 40 28"><defs><linearGradient id="slc" x1="0" y1="0" x2="1" y2="1"><stop offset="0" stop-color="#c4c4c4"/><stop offset="1" stop-color="#8e8e8e"/></linearGradient></defs><path d="M2 15L22 5L38 11.500L18 23Z" fill="url(#slc)"/><path d="M2 15L18 23L38 11.500V15L18 27.500L2 18.500Z" fill="#4e4e4e"/><path d="M24 3L38 8.500V12.500L17 24L2 16.500V13" fill="none" stroke="#2a4af0" stroke-width="3" stroke-linejoin="round"/><ellipse cx="19" cy="13.500" rx="4.200" ry="2.500" fill="#c8455a"/></svg>
<svg class="ico" style="left:512px;top:171px" width="40" height="27" viewBox="0 0 40 27"><path d="M16 2H30V20H38L30 24H1L16 2Z" fill="#6a6a6a"/><path d="M30 2V20H38V22L30 24Z" fill="#4a4a4a"/><path d="M15.0 3H28.0M12.8 6H25.8M10.6 9H23.6M8.4 12H21.4M6.2 15H19.2M4.0 18H17.0M1.8 21H14.8" stroke="#b5b5b5" stroke-width="1.300"/><path d="M16 2L1 24" stroke="#555" stroke-width="1"/></svg>
<svg class="ico" style="left:569px;top:166px" width="38" height="37" viewBox="0 0 38 37"><path d="M1 4L36.500 0.500L35 30L29.500 31L30.500 6.500L7 9L9.500 35L4 36.500Z" fill="#8c8c8c" stroke="#6e6e6e" stroke-width=".6"/><path d="M8 10L29 29M30 7L9 33" stroke="#8a2418" stroke-width="4"/></svg>
<svg class="ico" style="left:625px;top:169px" width="37" height="29" viewBox="0 0 37 29"><defs><linearGradient id="bk1" x1="0" y1="0" x2="1" y2="0"><stop offset="0" stop-color="#c46a36"/><stop offset="1" stop-color="#a85228"/></linearGradient></defs><path d="M1 1L36 2V24L1 28Z" fill="url(#bk1)"/><path d="M1 7.5L36 8.0M1 14L36 14.2M1 20.5L36 20.4" stroke="#d89468" stroke-width=".9" opacity=".8"/><path d="M4 1.5v5.600M13 1.5v5.600M22 1.5v5.600M31 1.5v5.600M8.5 8.1v5.600M17.5 8.1v5.600M26.5 8.1v5.600M35.5 8.1v5.600M4 14.7v5.600M13 14.7v5.600M22 14.7v5.600M31 14.7v5.600M8.5 21.3v5.600M17.5 21.3v5.600M26.5 21.3v5.600M35.5 21.3v5.600" stroke="#d89468" stroke-width=".9" opacity=".8"/></svg>
<svg class="ico" style="left:682px;top:166px" width="37" height="37" viewBox="0 0 37 37"><defs><radialGradient id="zf1" cx="0.4" cy="0.35" r="0.7"><stop offset="0" stop-color="#ffffff"/><stop offset="1" stop-color="#9ccaf0"/></radialGradient></defs><path d="M5 0.500V34M30 0.500V34M0.500 5H35M0.500 30H35" stroke="#1f3aa8" stroke-width="2.200"/><path d="M13 6.500L18 1.500L23 6.500Z M7 12L1.500 17.500L7 23Z" fill="#f8c818" stroke="#d8a000" stroke-width=".6"/><path d="M25 25L33 33" stroke="#f08a1c" stroke-width="4" stroke-linecap="round"/><path d="M31 31L34 34" stroke="#fbe8d0" stroke-width="2.500" stroke-linecap="round"/><circle cx="19" cy="19" r="8.500" fill="url(#zf1)" stroke="#9ab0c8" stroke-width="1.300"/></svg>
<div class="sep" style="left:204px;top:165px;height:39px"></div>
<div class="sep" style="left:307px;top:165px;height:39px"></div>
<div class="sep" style="left:363px;top:165px;height:39px"></div>
<div class="sep" style="left:558px;top:165px;height:39px"></div>
<div class="sep" style="left:614px;top:165px;height:39px"></div>
<div class="sep" style="left:670px;top:165px;height:39px"></div>
<div id="leftdock">
<div class="abs" style="left:0;top:2px;width:81px;height:788px;box-sizing:border-box;border:1px solid #a0a0a0;box-shadow:inset 1px 1px 0 #fff"></div>
</div>
<div class="band" style="left:3px;top:215px;width:73px;height:207px"></div>
<div class="grip" style="left:8px;top:220px;height:196px"></div>
<div class="band" style="left:6px;top:423px;width:74px;height:313px"></div>
<div class="grip" style="left:11px;top:428px;height:302px"></div>
<div class="hl" style="left:16px;top:219px;width:55px;height:45px"></div>
<div class="hl" style="left:16px;top:265px;width:55px;height:45px"></div>
<div class="hl" style="left:16px;top:311px;width:55px;height:45px"></div>
<svg class="ico" style="left:29px;top:223px" width="33" height="34" viewBox="0 0 33 34"><defs><linearGradient id="dwm" x1="0" y1="0" x2="0" y2="1"><stop offset="0" stop-color="#ffffff"/><stop offset="1" stop-color="#dcdcdc"/></linearGradient></defs><path d="M8 4H27V32H1V11Z" fill="url(#dwm)" stroke="#7a7a7a" stroke-width="1.200" stroke-linejoin="round"/><path d="M1 11L8 4V11Z" fill="#6a6a6a"/><path d="M1.6 30.3H26.4" stroke="#8c8c8c" stroke-width="2.800"/><text x="3.2" y="26" font-family="Liberation Mono, monospace" font-weight="bold" font-size="14" fill="#ececec" stroke="#555" stroke-width="1.500" paint-order="stroke" stroke-linejoin="round" textLength="21.5" lengthAdjust="spacingAndGlyphs">DWG</text><g transform="translate(13,0.5) scale(1.0)"><path d="M1 19V9A8 8 0 0 1 17.500 9V19H11.500V9.500A2.200 2.200 0 0 0 7 9.500V19Z" fill="#a83a44" stroke="#7c1c26" stroke-width="1.300" stroke-linejoin="round"/><path d="M3 9A6 6 0 0 1 14 6" fill="none" stroke="#d88a90" stroke-width="1.200"/><rect x="1.500" y="12.500" width="5" height="5" fill="#a8d0f0" stroke="#6a8ab0" stroke-width=".6"/><rect x="12" y="12.500" width="5" height="5" fill="#a8d0f0" stroke="#6a8ab0" stroke-width=".6"/></g></svg>
<svg class="ico" style="left:31px;top:271px" width="32" height="33" viewBox="0 0 32 33"><rect x="2" y="1.5" width="23" height="30" fill="#fff" stroke="#6e6e6e" stroke-width="1.100"/><path d="M6.6 1.5V31.5M11.2 1.5V31.5M15.8 1.5V31.5M20.4 1.5V31.5M2 5.8H25M2 10.1H25M2 14.4H25M2 18.6H25M2 22.9H25M2 27.2H25" stroke="#6e6e6e" stroke-width="1"/><path d="M2 30.0H25" stroke="#6e6e6e" stroke-width="3.500"/><path d="M8 7V25.500H22" fill="none" stroke="#0a8a0a" stroke-width="3.200"/><rect x="6" y="5.500" width="4" height="3.500" fill="#1e90ff"/><rect x="6" y="24" width="4" height="3.500" fill="#1e90ff"/><rect x="20.500" y="24" width="4" height="3.500" fill="#1e90ff"/><g transform="translate(12.5,2.5) scale(0.95)"><path d="M1 19V9A8 8 0 0 1 17.500 9V19H11.500V9.500A2.200 2.200 0 0 0 7 9.500V19Z" fill="#a83a44" stroke="#7c1c26" stroke-width="1.300" stroke-linejoin="round"/><path d="M3 9A6 6 0 0 1 14 6" fill="none" stroke="#d88a90" stroke-width="1.200"/><rect x="1.500" y="12.500" width="5" height="5" fill="#a8d0f0" stroke="#6a8ab0" stroke-width=".6"/><rect x="12" y="12.500" width="5" height="5" fill="#a8d0f0" stroke="#6a8ab0" stroke-width=".6"/></g></svg>
<svg class="ico" style="left:29px;top:316px" width="33" height="34" viewBox="0 0 33 34"><rect x="1.5" y="3.5" width="25.5" height="29" fill="#fff" stroke="#6e6e6e" stroke-width="1.100"/><path d="M5.8 3.5V32.5M10.0 3.5V32.5M14.2 3.5V32.5M18.5 3.5V32.5M22.8 3.5V32.5M1.5 7.6H27.0M1.5 11.8H27.0M1.5 15.9H27.0M1.5 20.1H27.0M1.5 24.2H27.0M1.5 28.4H27.0" stroke="#6e6e6e" stroke-width="1"/><path d="M1.5 31.0H27.0" stroke="#6e6e6e" stroke-width="3.500"/><g transform="translate(13.5,0.8) scale(1.0)"><path d="M1 19V9A8 8 0 0 1 17.500 9V19H11.500V9.500A2.200 2.200 0 0 0 7 9.500V19Z" fill="#a83a44" stroke="#7c1c26" stroke-width="1.300" stroke-linejoin="round"/><path d="M3 9A6 6 0 0 1 14 6" fill="none" stroke="#d88a90" stroke-width="1.200"/><rect x="1.500" y="12.500" width="5" height="5" fill="#a8d0f0" stroke="#6a8ab0" stroke-width=".6"/><rect x="12" y="12.500" width="5" height="5" fill="#a8d0f0" stroke="#6a8ab0" stroke-width=".6"/></g></svg>
<svg class="ico" style="left:28px;top:362px" width="33" height="34" viewBox="0 0 33 34"><rect x="1.5" y="3.5" width="25" height="29" fill="#fff" stroke="#6e6e6e" stroke-width="1.100"/><path d="M5.7 3.5V32.5M9.8 3.5V32.5M14.0 3.5V32.5M18.2 3.5V32.5M22.3 3.5V32.5M1.5 7.6H26.5M1.5 11.8H26.5M1.5 15.9H26.5M1.5 20.1H26.5M1.5 24.2H26.5M1.5 28.4H26.5" stroke="#6e6e6e" stroke-width="1"/><path d="M1.5 31.0H26.5" stroke="#6e6e6e" stroke-width="3.500"/><rect x="2.500" y="4.5" width="3.200" height="3.200" fill="#f01010"/><rect x="2.500" y="8.6" width="3.200" height="3.200" fill="#f01010"/><rect x="2.500" y="12.7" width="3.200" height="3.200" fill="#f01010"/><rect x="2.500" y="16.8" width="3.200" height="3.200" fill="#f01010"/><rect x="2.500" y="20.9" width="3.200" height="3.200" fill="#f01010"/><rect x="2.5" y="25.300" width="3.200" height="3.200" fill="#f01010"/><rect x="6.7" y="25.300" width="3.200" height="3.200" fill="#f01010"/><rect x="10.8" y="25.300" width="3.200" height="3.200" fill="#f01010"/><rect x="15.0" y="25.300" width="3.200" height="3.200" fill="#f01010"/><rect x="19.1" y="25.300" width="3.200" height="3.200" fill="#f01010"/><rect x="23.2" y="25.300" width="3.200" height="3.200" fill="#f01010"/><g transform="translate(13.5,0.8) scale(1.0)"><path d="M1 19V9A8 8 0 0 1 17.500 9V19H11.500V9.500A2.200 2.200 0 0 0 7 9.500V19Z" fill="#a83a44" stroke="#7c1c26" stroke-width="1.300" stroke-linejoin="round"/><path d="M3 9A6 6 0 0 1 14 6" fill="none" stroke="#d88a90" stroke-width="1.200"/><rect x="1.500" y="12.500" width="5" height="5" fill="#a8d0f0" stroke="#6a8ab0" stroke-width=".6"/><rect x="12" y="12.500" width="5" height="5" fill="#a8d0f0" stroke="#6a8ab0" stroke-width=".6"/></g></svg>
<svg class="ico" style="left:36px;top:429px" width="29" height="37" viewBox="0 0 29 37"><path d="M22 23L26.500 32" stroke="#1e1e1e" stroke-width="6.500" stroke-linecap="round"/><path d="M22.500 24L26.500 32" stroke="#555" stroke-width="2.200" stroke-linecap="round"/><circle cx="14.5" cy="14.5" r="11.500" fill="#bdbdbd" stroke="#1e1e1e" stroke-width="3.600"/><circle cx="14.5" cy="14.5" r="9.200" fill="none" stroke="#6a6a6a" stroke-width="1.300"/><circle cx="14.5" cy="14.5" r="6.800" fill="#2e9fe0"/><path d="M9.500 14.500H19.500M14.500 9.500V19.500" stroke="#fff" stroke-width="2.600"/></svg>
<svg class="ico" style="left:36px;top:475px" width="29" height="37" viewBox="0 0 29 37"><path d="M22 23L26.500 32" stroke="#1e1e1e" stroke-width="6.500" stroke-linecap="round"/><path d="M22.500 24L26.500 32" stroke="#555" stroke-width="2.200" stroke-linecap="round"/><circle cx="14.5" cy="14.5" r="11.500" fill="#bdbdbd" stroke="#1e1e1e" stroke-width="3.600"/><circle cx="14.5" cy="14.5" r="9.200" fill="none" stroke="#6a6a6a" stroke-width="1.300"/><circle cx="14.5" cy="14.5" r="6.800" fill="#2e9fe0"/><path d="M9.500 14.500H19.500" stroke="#fff" stroke-width="2.600"/></svg>
<svg class="ico" style="left:36px;top:522px" width="29" height="37" viewBox="0 0 29 37"><path d="M22 23L26.500 32" stroke="#1e1e1e" stroke-width="6.500" stroke-linecap="round"/><path d="M22.500 24L26.500 32" stroke="#555" stroke-width="2.200" stroke-linecap="round"/><circle cx="14.5" cy="14.5" r="11.500" fill="#bdbdbd" stroke="#1e1e1e" stroke-width="3.600"/><circle cx="14.5" cy="14.5" r="9.200" fill="none" stroke="#6a6a6a" stroke-width="1.300"/><circle cx="14.5" cy="14.5" r="6.800" fill="#2e9fe0"/><path d="M10 13L14.500 8.500L19 13Z M10 16L14.500 20.500L19 16Z" fill="#fff"/></svg>
<svg class="ico" style="left:29px;top:568px" width="36" height="37" viewBox="0 0 36 37"><rect x="1.500" y="13" width="18" height="17" fill="#bfe0fa" stroke="#1e90e8" stroke-width="1.600"/><path d="M6 13V30M10.500 13V30M15 13V30M1.500 17.500H19.500M1.500 22H19.500M1.500 26.500H19.500" stroke="#7cc0f4" stroke-width=".7"/><path d="M29.0 23.0L33.5 32.0" stroke="#1e1e1e" stroke-width="6.500" stroke-linecap="round"/><path d="M29.5 24.0L33.5 32.0" stroke="#555" stroke-width="2.200" stroke-linecap="round"/><circle cx="21.5" cy="14.5" r="11.500" fill="#e4e4e4" fill-opacity=".5" stroke="#1e1e1e" stroke-width="3.600"/><circle cx="21.5" cy="14.5" r="9.200" fill="none" stroke="#6a6a6a" stroke-width="1.300"/></svg>
<svg class="ico" style="left:29px;top:614px" width="37" height="37" viewBox="0 0 37 37"><path d="M4 9V33M0.500 13L4 9L7.500 13M0.500 29L4 33L7.500 29" fill="none" stroke="#0c78d0" stroke-width="1.800"/><path d="M2 22L20 14L36 20L18 29Z" fill="#8ccaf0" stroke="#3a98d8" stroke-width=".8"/><path d="M2 22L18 29L36 20V23L18 32L2 25Z" fill="#4aa0dc"/><path d="M29.5 23.0L34 32.0" stroke="#1e1e1e" stroke-width="6.500" stroke-linecap="round"/><path d="M30 24.0L34 32.0" stroke="#555" stroke-width="2.200" stroke-linecap="round"/><circle cx="22" cy="14.5" r="11.500" fill="#e4e4e4" fill-opacity=".5" stroke="#1e1e1e" stroke-width="3.600"/><circle cx="22" cy="14.5" r="9.200" fill="none" stroke="#6a6a6a" stroke-width="1.300"/></svg>
<svg class="ico" style="left:29px;top:660px" width="38" height="38" viewBox="0 0 37 37"><defs><radialGradient id="zf1" cx="0.4" cy="0.35" r="0.7"><stop offset="0" stop-color="#ffffff"/><stop offset="1" stop-color="#9ccaf0"/></radialGradient></defs><path d="M5 0.500V34M30 0.500V34M0.500 5H35M0.500 30H35" stroke="#1f3aa8" stroke-width="2.200"/><path d="M13 6.500L18 1.500L23 6.500Z M7 12L1.500 17.500L7 23Z" fill="#f8c818" stroke="#d8a000" stroke-width=".6"/><path d="M25 25L33 33" stroke="#f08a1c" stroke-width="4" stroke-linecap="round"/><path d="M31 31L34 34" stroke="#fbe8d0" stroke-width="2.500" stroke-linecap="round"/><circle cx="19" cy="19" r="8.500" fill="url(#zf1)" stroke="#9ab0c8" stroke-width="1.300"/></svg>
<div id="canvas"></div>
<svg class="ico" style="left:82px;top:212px" width="1347" height="790" viewBox="82 212 1347 790" font-family="Liberation Sans, sans-serif">
<path d="M441.500 212V1002M82 924.500H1429" stroke="#b9b9b9" stroke-width="1" fill="none"/>
<rect x="441" y="338" width="551.5" height="586" fill="#f7f7c1"/>
<rect x="992" y="618" width="62.5" height="163.500" fill="#f7f7c1"/>
<path d="M441.500 402V338.500H992.500V409" stroke="#0a0aff" stroke-width="1.5" fill="none"/>
<path d="M992 618.500H1054.500V781.500H984" stroke="#0a0aff" stroke-width="1.5" fill="none"/>
<rect x="452.5" y="402.5" width="528.0" height="12.0" fill="#ccfccc" stroke="#555555" stroke-width="1"/>
<rect x="455.5" y="617.5" width="523.0" height="11.0" fill="#ccfccc" stroke="#555555" stroke-width="1"/>
<rect x="455.5" y="770.5" width="513.0" height="12.0" fill="#ccfccc" stroke="#555555" stroke-width="1"/>
<rect x="469.5" y="912.5" width="443.0" height="11.0" fill="#ccfccc" stroke="#555555" stroke-width="1"/>
<rect x="441.5" y="473.5" width="11.0" height="134.0" fill="#ccfccc" stroke="#555555" stroke-width="1"/>
<rect x="441.5" y="628.5" width="11.0" height="143.0" fill="#ccfccc" stroke="#555555" stroke-width="1"/>
<rect x="441.5" y="792.5" width="11.0" height="105.0" fill="#ccfccc" stroke="#555555" stroke-width="1"/>
<rect x="597.5" y="414.5" width="12.0" height="202.0" fill="#ccfccc" stroke="#555555" stroke-width="1"/>
<rect x="597.5" y="628.5" width="12.0" height="143.0" fill="#ccfccc" stroke="#555555" stroke-width="1"/>
<rect x="597.5" y="783.5" width="12.0" height="128.0" fill="#ccfccc" stroke="#555555" stroke-width="1"/>
<rect x="793.5" y="414.5" width="12.0" height="202.0" fill="#ccfccc" stroke="#555555" stroke-width="1"/>
<rect x="793.5" y="628.5" width="12.0" height="143.0" fill="#ccfccc" stroke="#555555" stroke-width="1"/>
<rect x="793.5" y="783.5" width="12.0" height="128.0" fill="#ccfccc" stroke="#555555" stroke-width="1"/>
<rect x="980.5" y="424.5" width="12.0" height="183.0" fill="#ccfccc" stroke="#555555" stroke-width="1"/>
<rect x="980.5" y="628.5" width="12.0" height="144.0" fill="#ccfccc" stroke="#555555" stroke-width="1"/>
<rect x="980.5" y="799.5" width="12.0" height="113.0" fill="#ccfccc" stroke="#555555" stroke-width="1"/>
<rect x="441.5" y="402.5" width="11.0" height="71.0" fill="#fdc993" stroke="#555555" stroke-width="1"/>
<rect x="912.5" y="912.5" width="79.0" height="11.0" fill="#fdc993" stroke="#555555" stroke-width="1"/>
<rect x="791.5" y="402.5" width="14.0" height="14.0" fill="#b4bbfb" stroke="#555555" stroke-width="1"/>
<rect x="978.5" y="402.5" width="14.0" height="22.0" fill="#b4bbfb" stroke="#555555" stroke-width="1"/>
<rect x="441.5" y="607.5" width="14.0" height="22.0" fill="#b4bbfb" stroke="#555555" stroke-width="1"/>
<rect x="596.5" y="615.5" width="14.0" height="14.0" fill="#b4bbfb" stroke="#555555" stroke-width="1"/>
<rect x="791.5" y="615.5" width="14.0" height="14.0" fill="#b4bbfb" stroke="#555555" stroke-width="1"/>
<rect x="978.5" y="607.5" width="14.0" height="22.0" fill="#b4bbfb" stroke="#555555" stroke-width="1"/>
<rect x="441.5" y="770.5" width="14.0" height="22.0" fill="#b4bbfb" stroke="#555555" stroke-width="1"/>
<rect x="596.5" y="770.5" width="14.0" height="14.0" fill="#b4bbfb" stroke="#555555" stroke-width="1"/>
<rect x="791.5" y="770.5" width="14.0" height="14.0" fill="#b4bbfb" stroke="#555555" stroke-width="1"/>
<rect x="599.5" y="910.5" width="22.0" height="14.0" fill="#b4bbfb" stroke="#555555" stroke-width="1"/>
<rect x="794.5" y="910.5" width="22.0" height="14.0" fill="#b4bbfb" stroke="#555555" stroke-width="1"/>
<path d="M967.5 771.5H994.500V799H984V782.500H967.5Z" fill="#b4bbfb" stroke="#555555"/>
<path d="M442.5 897.500H453V913H469.500V924H442.5Z" fill="#b4bbfb" stroke="#555555"/>
<path d="M985 781.500H995" stroke="#0a0aff" stroke-width="1.500"/>
<rect x="596.5" y="402.5" width="14.500" height="14.500" fill="#3674e2"/><rect x="599" y="410" width="3" height="4" fill="#9cc0ff"/><rect x="605.500" y="410" width="3" height="4" fill="#9cc0ff"/>
<path d="M593 407.500H600M607 407.500H614M603.500 397.500V404M603.500 411V417.500" stroke="#000" stroke-width="1.3"/><circle cx="603.5" cy="407.5" r="4.500" fill="none" stroke="#fff" stroke-width="2.200" stroke-dasharray="1.500 1.500"/><circle cx="603.5" cy="407.5" r="4.500" fill="none" stroke="#000" stroke-width=".9" stroke-dasharray="2 1.500"/><circle cx="603.5" cy="407.5" r="1.600" fill="#0a1a60"/>
<rect x="574" y="381.500" width="64.5" height="46" fill="none" stroke="#7d0a14" stroke-width="5"/>
<text x="511.6" y="398.5" font-size="9.5" fill="#06781a" stroke="#06781a" stroke-width="0.3" textLength="15.1" lengthAdjust="spacingAndGlyphs">B10</text>
<text x="534.8" y="398.5" font-size="6.8" fill="#1f7410" stroke="#1f7410" stroke-width="0.3" textLength="26.0" lengthAdjust="spacingAndGlyphs">250/600</text>
<text x="578.5" y="397.0" font-size="9.5" fill="#0f3cf5" stroke="#0f3cf5" stroke-width="0.3" textLength="15.1" lengthAdjust="spacingAndGlyphs">C14</text>
<text x="602.5" y="397.0" font-size="6.8" fill="#0f3cf5" stroke="#0f3cf5" stroke-width="0.3" textLength="25.2" lengthAdjust="spacingAndGlyphs">300/300</text>
<text x="704.7" y="389.7" font-size="9.5" fill="#a9a97c" stroke="#a9a97c" stroke-width="0" textLength="15.1" lengthAdjust="spacingAndGlyphs">S11</text>
<text x="728.6" y="389.7" font-size="6.8" fill="#a9a97c" stroke="#a9a97c" stroke-width="0" textLength="11.4" lengthAdjust="spacingAndGlyphs">150</text>
<text x="685.0" y="398.5" font-size="9.5" fill="#06781a" stroke="#06781a" stroke-width="0.3" textLength="15.4" lengthAdjust="spacingAndGlyphs">B11</text>
<text x="708.5" y="398.5" font-size="6.8" fill="#1f7410" stroke="#1f7410" stroke-width="0.3" textLength="25.7" lengthAdjust="spacingAndGlyphs">250/600</text>
<text x="773.6" y="397.0" font-size="9.5" fill="#0f3cf5" stroke="#0f3cf5" stroke-width="0.3" textLength="15.1" lengthAdjust="spacingAndGlyphs">C15</text>
<text x="796.8" y="397.0" font-size="6.8" fill="#0f3cf5" stroke="#0f3cf5" stroke-width="0.3" textLength="25.2" lengthAdjust="spacingAndGlyphs">300/300</text>
<text x="875.9" y="398.5" font-size="9.5" fill="#06781a" stroke="#06781a" stroke-width="0.3" textLength="15.1" lengthAdjust="spacingAndGlyphs">B12</text>
<text x="899.0" y="398.5" font-size="6.8" fill="#1f7410" stroke="#1f7410" stroke-width="0.3" textLength="26.0" lengthAdjust="spacingAndGlyphs">250/600</text>
<text x="960.0" y="396.0" font-size="9.5" fill="#0f3cf5" stroke="#0f3cf5" stroke-width="0.3" textLength="15.0" lengthAdjust="spacingAndGlyphs">C16</text>
<text x="983.7" y="396.0" font-size="6.8" fill="#0f3cf5" stroke="#0f3cf5" stroke-width="0.3" textLength="25.3" lengthAdjust="spacingAndGlyphs">500/300</text>
<text x="428.0" y="600.8" font-size="9.5" fill="#0f3cf5" stroke="#0f3cf5" stroke-width="0.3" textLength="9.5" lengthAdjust="spacingAndGlyphs">C9</text>
<text x="446.3" y="600.8" font-size="6.8" fill="#0f3cf5" stroke="#0f3cf5" stroke-width="0.3" textLength="25.7" lengthAdjust="spacingAndGlyphs">500/300</text>
<text x="515.6" y="613.6" font-size="9.5" fill="#06781a" stroke="#06781a" stroke-width="0.3" textLength="9.8" lengthAdjust="spacingAndGlyphs">B7</text>
<text x="533.5" y="613.6" font-size="6.8" fill="#1f7410" stroke="#1f7410" stroke-width="0.3" textLength="25.5" lengthAdjust="spacingAndGlyphs">250/600</text>
<text x="579.0" y="610.0" font-size="9.5" fill="#0f3cf5" stroke="#0f3cf5" stroke-width="0.3" textLength="14.7" lengthAdjust="spacingAndGlyphs">C10</text>
<text x="601.8" y="610.0" font-size="6.8" fill="#0f3cf5" stroke="#0f3cf5" stroke-width="0.3" textLength="25.7" lengthAdjust="spacingAndGlyphs">300/300</text>
<text x="690.4" y="613.6" font-size="9.5" fill="#06781a" stroke="#06781a" stroke-width="0.3" textLength="10.0" lengthAdjust="spacingAndGlyphs">B8</text>
<text x="708.6" y="613.6" font-size="6.8" fill="#1f7410" stroke="#1f7410" stroke-width="0.3" textLength="25.6" lengthAdjust="spacingAndGlyphs">250/600</text>
<text x="773.5" y="610.0" font-size="9.5" fill="#0f3cf5" stroke="#0f3cf5" stroke-width="0.3" textLength="14.5" lengthAdjust="spacingAndGlyphs">C11</text>
<text x="796.8" y="610.0" font-size="6.8" fill="#0f3cf5" stroke="#0f3cf5" stroke-width="0.3" textLength="25.7" lengthAdjust="spacingAndGlyphs">300/300</text>
<text x="882.8" y="613.6" font-size="9.5" fill="#06781a" stroke="#06781a" stroke-width="0.3" textLength="9.6" lengthAdjust="spacingAndGlyphs">B9</text>
<text x="900.6" y="613.6" font-size="6.8" fill="#1f7410" stroke="#1f7410" stroke-width="0.3" textLength="25.6" lengthAdjust="spacingAndGlyphs">250/600</text>
<text x="960.5" y="600.8" font-size="9.5" fill="#0f3cf5" stroke="#0f3cf5" stroke-width="0.3" textLength="14.5" lengthAdjust="spacingAndGlyphs">C12</text>
<text x="983.8" y="600.8" font-size="6.8" fill="#0f3cf5" stroke="#0f3cf5" stroke-width="0.3" textLength="25.6" lengthAdjust="spacingAndGlyphs">500/300</text>
<text x="428.0" y="764.0" font-size="9.5" fill="#0f3cf5" stroke="#0f3cf5" stroke-width="0.3" textLength="9.5" lengthAdjust="spacingAndGlyphs">C5</text>
<text x="446.3" y="764.0" font-size="6.8" fill="#0f3cf5" stroke="#0f3cf5" stroke-width="0.3" textLength="25.7" lengthAdjust="spacingAndGlyphs">500/300</text>
<text x="515.6" y="767.0" font-size="9.5" fill="#06781a" stroke="#06781a" stroke-width="0.3" textLength="9.8" lengthAdjust="spacingAndGlyphs">B4</text>
<text x="533.5" y="767.0" font-size="6.8" fill="#1f7410" stroke="#1f7410" stroke-width="0.3" textLength="25.5" lengthAdjust="spacingAndGlyphs">250/600</text>
<text x="584.3" y="765.6" font-size="9.5" fill="#0f3cf5" stroke="#0f3cf5" stroke-width="0.3" textLength="9.4" lengthAdjust="spacingAndGlyphs">C6</text>
<text x="601.8" y="765.6" font-size="6.8" fill="#0f3cf5" stroke="#0f3cf5" stroke-width="0.3" textLength="25.7" lengthAdjust="spacingAndGlyphs">300/300</text>
<text x="690.4" y="767.0" font-size="9.5" fill="#06781a" stroke="#06781a" stroke-width="0.3" textLength="10.0" lengthAdjust="spacingAndGlyphs">B5</text>
<text x="708.6" y="767.0" font-size="6.8" fill="#1f7410" stroke="#1f7410" stroke-width="0.3" textLength="25.6" lengthAdjust="spacingAndGlyphs">250/600</text>
<text x="778.6" y="765.6" font-size="9.5" fill="#0f3cf5" stroke="#0f3cf5" stroke-width="0.3" textLength="9.4" lengthAdjust="spacingAndGlyphs">C7</text>
<text x="796.8" y="765.6" font-size="6.8" fill="#0f3cf5" stroke="#0f3cf5" stroke-width="0.3" textLength="25.7" lengthAdjust="spacingAndGlyphs">300/300</text>
<text x="876.0" y="767.0" font-size="9.5" fill="#06781a" stroke="#06781a" stroke-width="0.3" textLength="9.9" lengthAdjust="spacingAndGlyphs">B6</text>
<text x="894.0" y="767.0" font-size="6.8" fill="#1f7410" stroke="#1f7410" stroke-width="0.3" textLength="25.7" lengthAdjust="spacingAndGlyphs">250/600</text>
<text x="954.0" y="764.0" font-size="9.5" fill="#0f3cf5" stroke="#0f3cf5" stroke-width="0.3" textLength="9.5" lengthAdjust="spacingAndGlyphs">C8</text>
<text x="971.7" y="764.0" font-size="6.8" fill="#0f3cf5" stroke="#0f3cf5" stroke-width="0.3" textLength="54.0" lengthAdjust="spacingAndGlyphs">600/600/250/250</text>
<text x="427.0" y="891.5" font-size="9.5" fill="#0f3cf5" stroke="#0f3cf5" stroke-width="0.3" textLength="9.3" lengthAdjust="spacingAndGlyphs">C1</text>
<text x="445.2" y="891.5" font-size="6.8" fill="#0f3cf5" stroke="#0f3cf5" stroke-width="0.3" textLength="54.1" lengthAdjust="spacingAndGlyphs">600/600/250/250</text>
<text x="528.4" y="908.3" font-size="9.5" fill="#06781a" stroke="#06781a" stroke-width="0.3" textLength="9.8" lengthAdjust="spacingAndGlyphs">B1</text>
<text x="546.3" y="908.3" font-size="6.8" fill="#1f7410" stroke="#1f7410" stroke-width="0.3" textLength="25.7" lengthAdjust="spacingAndGlyphs">250/600</text>
<text x="585.5" y="905.5" font-size="9.5" fill="#0f3cf5" stroke="#0f3cf5" stroke-width="0.3" textLength="9.3" lengthAdjust="spacingAndGlyphs">C2</text>
<text x="603.4" y="905.5" font-size="6.8" fill="#0f3cf5" stroke="#0f3cf5" stroke-width="0.3" textLength="25.6" lengthAdjust="spacingAndGlyphs">500/300</text>
<text x="697.0" y="908.3" font-size="9.5" fill="#06781a" stroke="#06781a" stroke-width="0.3" textLength="9.7" lengthAdjust="spacingAndGlyphs">B2</text>
<text x="714.9" y="908.3" font-size="6.8" fill="#1f7410" stroke="#1f7410" stroke-width="0.3" textLength="25.6" lengthAdjust="spacingAndGlyphs">250/600</text>
<text x="780.5" y="905.5" font-size="9.5" fill="#0f3cf5" stroke="#0f3cf5" stroke-width="0.3" textLength="9.3" lengthAdjust="spacingAndGlyphs">C3</text>
<text x="798.0" y="905.5" font-size="6.8" fill="#0f3cf5" stroke="#0f3cf5" stroke-width="0.3" textLength="25.6" lengthAdjust="spacingAndGlyphs">500/300</text>
<text x="847.4" y="908.3" font-size="9.5" fill="#06781a" stroke="#06781a" stroke-width="0.3" textLength="9.8" lengthAdjust="spacingAndGlyphs">B3</text>
<text x="865.4" y="908.3" font-size="6.8" fill="#1f7410" stroke="#1f7410" stroke-width="0.3" textLength="25.6" lengthAdjust="spacingAndGlyphs">250/600</text>
<text x="938.3" y="908.3" font-size="9.5" fill="#f06418" stroke="#f06418" stroke-width="0.3" textLength="12.4" lengthAdjust="spacingAndGlyphs">W4</text>
<text x="958.8" y="908.3" font-size="6.8" fill="#f06418" stroke="#f06418" stroke-width="0.3" textLength="11.7" lengthAdjust="spacingAndGlyphs">250</text>
<text x="514.0" y="517.5" font-size="9.5" fill="#a9a97c" stroke="#a9a97c" stroke-width="0" textLength="9.7" lengthAdjust="spacingAndGlyphs">S7</text>
<text x="532.4" y="517.5" font-size="6.8" fill="#a9a97c" stroke="#a9a97c" stroke-width="0" textLength="11.1" lengthAdjust="spacingAndGlyphs">150</text>
<text x="708.6" y="512.0" font-size="9.5" fill="#a9a97c" stroke="#a9a97c" stroke-width="0" textLength="9.8" lengthAdjust="spacingAndGlyphs">S8</text>
<text x="727.0" y="512.0" font-size="6.8" fill="#a9a97c" stroke="#a9a97c" stroke-width="0" textLength="11.0" lengthAdjust="spacingAndGlyphs">150</text>
<text x="899.0" y="513.0" font-size="9.5" fill="#a9a97c" stroke="#a9a97c" stroke-width="0" textLength="10.6" lengthAdjust="spacingAndGlyphs">S9</text>
<text x="917.6" y="513.0" font-size="6.8" fill="#a9a97c" stroke="#a9a97c" stroke-width="0" textLength="10.8" lengthAdjust="spacingAndGlyphs">150</text>
<text x="515.6" y="696.8" font-size="9.5" fill="#a9a97c" stroke="#a9a97c" stroke-width="0" textLength="9.8" lengthAdjust="spacingAndGlyphs">S4</text>
<text x="533.5" y="696.8" font-size="6.8" fill="#a9a97c" stroke="#a9a97c" stroke-width="0" textLength="11.2" lengthAdjust="spacingAndGlyphs">150</text>
<text x="721.4" y="696.8" font-size="9.5" fill="#a9a97c" stroke="#a9a97c" stroke-width="0" textLength="10.3" lengthAdjust="spacingAndGlyphs">S5</text>
<text x="739.5" y="696.8" font-size="6.8" fill="#a9a97c" stroke="#a9a97c" stroke-width="0" textLength="11.2" lengthAdjust="spacingAndGlyphs">150</text>
<text x="916.0" y="707.3" font-size="9.5" fill="#a9a97c" stroke="#a9a97c" stroke-width="0" textLength="10.0" lengthAdjust="spacingAndGlyphs">S6</text>
<text x="934.4" y="707.3" font-size="6.8" fill="#a9a97c" stroke="#a9a97c" stroke-width="0" textLength="11.4" lengthAdjust="spacingAndGlyphs">150</text>
<text x="993.8" y="707.3" font-size="9.5" fill="#a9a97c" stroke="#a9a97c" stroke-width="0" textLength="15.6" lengthAdjust="spacingAndGlyphs">S10</text>
<text x="1017.6" y="707.3" font-size="6.8" fill="#a9a97c" stroke="#a9a97c" stroke-width="0" textLength="11.2" lengthAdjust="spacingAndGlyphs">150</text>
<text x="510.4" y="839.5" font-size="9.5" fill="#a9a97c" stroke="#a9a97c" stroke-width="0" textLength="9.8" lengthAdjust="spacingAndGlyphs">S1</text>
<text x="528.4" y="839.5" font-size="6.8" fill="#a9a97c" stroke="#a9a97c" stroke-width="0" textLength="11.2" lengthAdjust="spacingAndGlyphs">150</text>
<text x="693.2" y="844.9" font-size="9.5" fill="#a9a97c" stroke="#a9a97c" stroke-width="0" textLength="10.0" lengthAdjust="spacingAndGlyphs">S2</text>
<text x="711.4" y="844.9" font-size="6.8" fill="#a9a97c" stroke="#a9a97c" stroke-width="0" textLength="11.2" lengthAdjust="spacingAndGlyphs">150</text>
<text x="876.0" y="844.9" font-size="9.5" fill="#a9a97c" stroke="#a9a97c" stroke-width="0" textLength="9.9" lengthAdjust="spacingAndGlyphs">S3</text>
<text x="894.5" y="844.9" font-size="6.8" fill="#a9a97c" stroke="#a9a97c" stroke-width="0" textLength="11.2" lengthAdjust="spacingAndGlyphs">150</text>
<g transform="translate(439.8,543.2) rotate(-90)"><text x="0" y="0" font-size="9.5" fill="#06781a" stroke="#06781a" stroke-width=".3" textLength="13" lengthAdjust="spacingAndGlyphs">B15</text><text x="21.5" y="0" font-size="6.8" fill="#1f7410" stroke="#1f7410" stroke-width=".3" textLength="25.9" lengthAdjust="spacingAndGlyphs">250/600</text></g>
<g transform="translate(439.8,452.7) rotate(-90)"><text x="0" y="0" font-size="9.5" fill="#f06418" stroke="#f06418" stroke-width=".3" textLength="16" lengthAdjust="spacingAndGlyphs">W13</text><text x="24.5" y="0" font-size="6.8" fill="#f06418" stroke="#f06418" stroke-width=".3" textLength="13.2" lengthAdjust="spacingAndGlyphs">250</text></g>
<g transform="translate(596.0,522.6) rotate(-90)"><text x="0" y="0" font-size="9.5" fill="#06781a" stroke="#06781a" stroke-width=".3" textLength="13" lengthAdjust="spacingAndGlyphs">B18</text><text x="21.5" y="0" font-size="6.8" fill="#1f7410" stroke="#1f7410" stroke-width=".3" textLength="26.1" lengthAdjust="spacingAndGlyphs">250/600</text></g>
<g transform="translate(791.5,524.7) rotate(-90)"><text x="0" y="0" font-size="9.5" fill="#06781a" stroke="#06781a" stroke-width=".3" textLength="13" lengthAdjust="spacingAndGlyphs">B21</text><text x="21.5" y="0" font-size="6.8" fill="#1f7410" stroke="#1f7410" stroke-width=".3" textLength="26.2" lengthAdjust="spacingAndGlyphs">250/600</text></g>
<g transform="translate(978.5,528.0) rotate(-90)"><text x="0" y="0" font-size="9.5" fill="#06781a" stroke="#06781a" stroke-width=".3" textLength="13" lengthAdjust="spacingAndGlyphs">B24</text><text x="21.5" y="0" font-size="6.8" fill="#1f7410" stroke="#1f7410" stroke-width=".3" textLength="26.5" lengthAdjust="spacingAndGlyphs">250/600</text></g>
<g transform="translate(439.8,711.0) rotate(-90)"><text x="0" y="0" font-size="9.5" fill="#06781a" stroke="#06781a" stroke-width=".3" textLength="13" lengthAdjust="spacingAndGlyphs">B14</text><text x="21.5" y="0" font-size="6.8" fill="#1f7410" stroke="#1f7410" stroke-width=".3" textLength="25.8" lengthAdjust="spacingAndGlyphs">250/600</text></g>
<g transform="translate(596.0,711.0) rotate(-90)"><text x="0" y="0" font-size="9.5" fill="#06781a" stroke="#06781a" stroke-width=".3" textLength="13" lengthAdjust="spacingAndGlyphs">B17</text><text x="21.5" y="0" font-size="6.8" fill="#1f7410" stroke="#1f7410" stroke-width=".3" textLength="25.8" lengthAdjust="spacingAndGlyphs">250/600</text></g>
<g transform="translate(791.8,711.0) rotate(-90)"><text x="0" y="0" font-size="9.5" fill="#06781a" stroke="#06781a" stroke-width=".3" textLength="13" lengthAdjust="spacingAndGlyphs">B20</text><text x="21.5" y="0" font-size="6.8" fill="#1f7410" stroke="#1f7410" stroke-width=".3" textLength="25.8" lengthAdjust="spacingAndGlyphs">250/600</text></g>
<g transform="translate(978.5,708.3) rotate(-90)"><text x="0" y="0" font-size="9.5" fill="#06781a" stroke="#06781a" stroke-width=".3" textLength="13" lengthAdjust="spacingAndGlyphs">B23</text><text x="21.5" y="0" font-size="6.8" fill="#1f7410" stroke="#1f7410" stroke-width=".3" textLength="26.1" lengthAdjust="spacingAndGlyphs">250/600</text></g>
<g transform="translate(439.8,851.2) rotate(-90)"><text x="0" y="0" font-size="9.5" fill="#06781a" stroke="#06781a" stroke-width=".3" textLength="13" lengthAdjust="spacingAndGlyphs">B13</text><text x="21.5" y="0" font-size="6.8" fill="#1f7410" stroke="#1f7410" stroke-width=".3" textLength="26.7" lengthAdjust="spacingAndGlyphs">250/600</text></g>
<g transform="translate(596.0,859.3) rotate(-90)"><text x="0" y="0" font-size="9.5" fill="#06781a" stroke="#06781a" stroke-width=".3" textLength="13" lengthAdjust="spacingAndGlyphs">B16</text><text x="21.5" y="0" font-size="6.8" fill="#1f7410" stroke="#1f7410" stroke-width=".3" textLength="26.8" lengthAdjust="spacingAndGlyphs">250/600</text></g>
<g transform="translate(791.8,859.3) rotate(-90)"><text x="0" y="0" font-size="9.5" fill="#06781a" stroke="#06781a" stroke-width=".3" textLength="13" lengthAdjust="spacingAndGlyphs">B19</text><text x="21.5" y="0" font-size="6.8" fill="#1f7410" stroke="#1f7410" stroke-width=".3" textLength="26.8" lengthAdjust="spacingAndGlyphs">250/600</text></g>
<g transform="translate(978.5,859.3) rotate(-90)"><text x="0" y="0" font-size="9.5" fill="#06781a" stroke="#06781a" stroke-width=".3" textLength="13" lengthAdjust="spacingAndGlyphs">B22</text><text x="21.5" y="0" font-size="6.8" fill="#1f7410" stroke="#1f7410" stroke-width=".3" textLength="26.8" lengthAdjust="spacingAndGlyphs">250/600</text></g>
</svg>
<div class="abs" style="left:366px;top:249px;width:342px;height:42px;background:#fff"></div>
<span class="t" style="left:368.5px;top:264.1px;font-size:20px;color:#8a0a12;font-weight:bold;transform:scaleX(0.9885);">1. Haga clic en el botón seleccionar</span>
<span class="t" style="left:639.0px;top:290.9px;font-size:20px;color:#8a0a12;font-weight:bold;transform:scaleX(0.9888);">2. Haga clic para seleccionar el</span>
<span class="t" style="left:639.0px;top:314.7px;font-size:20px;color:#8a0a12;font-weight:bold;transform:scaleX(0.9823);">miembro para modificar</span>
<span class="t" style="left:983.8px;top:261.7px;font-size:20px;color:#8a0a12;font-weight:bold;transform:scaleX(0.9865);">3. Aparece la</span>
<span class="t" style="left:983.8px;top:286.0px;font-size:20px;color:#8a0a12;font-weight:bold;transform:scaleX(0.9818);">ventana Propiedades</span>
<span class="t" style="left:983.8px;top:309.7px;font-size:20px;color:#8a0a12;font-weight:bold;transform:scaleX(0.9806);">del Miembro</span>
<div id="right"></div><div id="rightin"></div>
<span class="t" style="left:1438.0px;top:221.2px;font-size:50px;color:#a0a0a0;font-weight:bold;transform:scaleX(0.9693);">C</span>
<div class="abs" style="left:1495px;top:229px;width:73px;height:39px;box-sizing:border-box;background:#fff;border:1px solid #e3e3e3"></div>
<span class="t" style="left:1500.0px;top:237.0px;font-size:23px;color:#6c6c6c;font-weight:bold;transform:scaleX(1.0946);">10</span>
<div class="btn" style="left:1586px;top:228px;width:47px;height:42px"></div>
<svg class="ico" style="left:1591px;top:232px" width="34" height="35" viewBox="0 0 34 35"><defs><radialGradient id="hpb" cx="0.45" cy="0.3" r="0.75"><stop offset="0" stop-color="#8fd0ff"/><stop offset="0.7" stop-color="#2f8ee8"/><stop offset="1" stop-color="#1560c0"/></radialGradient><linearGradient id="hrb" x1="0" y1="0" x2="0" y2="1"><stop offset="0" stop-color="#fafafa"/><stop offset="1" stop-color="#8e8e8e"/></linearGradient></defs><circle cx="17" cy="17.500" r="16" fill="url(#hrb)" stroke="#b0b0b0" stroke-width=".6"/><circle cx="17" cy="17" r="13.500" fill="url(#hpb)"/><text x="17" y="25.500" font-family="Liberation Sans, sans-serif" font-weight="bold" font-size="24" text-anchor="middle" fill="#fff">?</text></svg>
<div class="hl" style="left:1433px;top:271px;width:34px;height:38px"></div>
<svg class="ico" style="left:1433px;top:271px" width="140" height="38" viewBox="1433 271 140 38"><path d="M1450 278V294M1446 290.500H1462" stroke="#444" stroke-width="4.500" fill="none"/><rect x="1446" y="286.500" width="8" height="8" fill="#f0000c"/><path d="M1482.500 278V294M1470 290.500H1486" stroke="#444" stroke-width="4.500" fill="none"/><rect x="1478.500" y="286.500" width="8" height="8" fill="#f0000c"/><path d="M1516 287V302.500M1504 290.500H1520" stroke="#444" stroke-width="4.500" fill="none"/><rect x="1512.500" y="286.500" width="8" height="8" fill="#f0000c"/><path d="M1550 287V302.500M1546 290.500H1563" stroke="#444" stroke-width="4.500" fill="none"/><rect x="1546" y="286.500" width="8" height="8" fill="#f0000c"/></svg>
<div class="tabp" style="left:1433px;top:333px;width:483px;height:233px"></div>
<div class="tabi" style="left:1630px;top:310px;width:129px;height:24px"></div>
<div class="tab" style="left:1433px;top:308px;width:198px;height:27px"></div>
<span class="t" style="left:1442.0px;top:314.1px;font-size:13.5px;color:#000;transform:scaleX(0.9685);">Visualizar/Modificar Geometría</span>
<span class="t" style="left:1635.5px;top:316.1px;font-size:13.5px;color:#000;transform:scaleX(0.9705);">Visualizar Armadura</span>
<div class="abs" style="left:1438px;top:338px;width:473px;height:223px;box-sizing:border-box;background:#fff;border:2px solid #858585;box-shadow:inset 1px 1px 0 #dcdcdc"></div>
<svg class="ico" style="left:1440px;top:340px" width="469" height="219" viewBox="1440 340 469 219" font-family="Liberation Sans, sans-serif"><rect x="1617" y="392" width="118" height="117.500" fill="#b3bcfd" stroke="#555" stroke-width="1"/><rect x="1670.500" y="368" width="10.500" height="10.500" fill="#2eaadc" stroke="#444" stroke-width="1"/><path d="M1610.5 392L1617 385.5L1623.5 392L1617 398.5Z" fill="none" stroke="#222" stroke-width="1"/><path d="M1610.5 450.5L1617 444.0L1623.5 450.5L1617 457.0Z" fill="none" stroke="#222" stroke-width="1"/><path d="M1610.5 509.5L1617 503.0L1623.5 509.5L1617 516.0Z" fill="#000" stroke="#222" stroke-width="1"/><path d="M1669.5 392L1676 385.5L1682.5 392L1676 398.5Z" fill="none" stroke="#222" stroke-width="1"/><path d="M1669.5 450.5L1676 444.0L1682.5 450.5L1676 457.0Z" fill="none" stroke="#222" stroke-width="1"/><path d="M1669.5 509.5L1676 503.0L1682.5 509.5L1676 516.0Z" fill="none" stroke="#222" stroke-width="1"/><path d="M1728.5 392L1735 385.5L1741.5 392L1735 398.5Z" fill="none" stroke="#222" stroke-width="1"/><path d="M1728.5 450.5L1735 444.0L1741.5 450.5L1735 457.0Z" fill="none" stroke="#222" stroke-width="1"/><path d="M1728.5 509.5L1735 503.0L1741.5 509.5L1735 516.0Z" fill="none" stroke="#222" stroke-width="1"/><path d="M1598.500 392V438M1598.500 464V509.500M1593 392H1604M1593 509.500H1604" stroke="#000" stroke-width="1" fill="none"/><path d="M1617 528.500H1662M1690 528.500H1735M1617 523V534M1735 523V534" stroke="#000" stroke-width="1" fill="none"/><text x="1664.500" y="534" font-size="14.500" textLength="22" lengthAdjust="spacingAndGlyphs">300</text><g transform="translate(1605.500,462) rotate(-90)"><text x="0" y="0" font-size="14.500" textLength="22" lengthAdjust="spacingAndGlyphs">300</text></g></svg>
<div class="abs" style="left:1435px;top:570px;width:452px;height:432px;box-sizing:border-box;border:1px solid #e3e3e3;border-bottom:none;background:#f0f0f0"></div>
<div class="abs" style="left:1897px;top:570px;width:19px;height:432px;background:#f0f0f0"></div>
<div class="abs" style="left:1898px;top:589px;width:17px;height:265px;background:#cdcdcd"></div>
<svg class="ico" style="left:1897px;top:570px" width="19" height="432" viewBox="0 0 19 432"><path d="M5 12L9.500 7.500L14 12M5 419L9.500 423.500L14 419" fill="none" stroke="#505050" stroke-width="1.6"/></svg>
<div class="pill" style="left:1444px;top:597px;width:434px;height:30px"></div>
<span class="t" style="left:1615.5px;top:603.9px;font-size:19px;color:#000;font-weight:bold;transform:scaleX(1.0269);">Geometría</span>
<div class="circ" style="left:1850px;top:600.0px"></div>
<svg class="ico" style="left:1849.5px;top:599.5px" width="24" height="24" viewBox="-12 -12 24 24"><path d="M-5.500 3L0 -5L5.500 3Z" fill="#000"/></svg>
<div class="abs" style="left:1438px;top:635px;width:447px;height:291px;box-sizing:border-box;border:1px solid #e3e3e3"></div>
<span class="t" style="left:1569.0px;top:658.6px;font-size:13.5px;color:#000;transform:scaleX(0.9691);">X/Y:</span>
<div class="edit" style="left:1599px;top:653px;width:147px;height:27px"></div>
<div class="edit" style="left:1746px;top:653px;width:136px;height:27px"></div>
<div class="edit" style="left:1599px;top:680px;width:147px;height:27px"></div>
<span class="t" style="left:1602.5px;top:658.6px;font-size:13.5px;color:#000;">0</span>
<span class="t" style="left:1749.5px;top:658.6px;font-size:13.5px;color:#000;">0</span>
<span class="t" style="left:1602.5px;top:686.1px;font-size:13.5px;color:#000;">0</span>
<span class="t" style="left:1573.0px;top:686.1px;font-size:13.5px;color:#000;transform:scaleX(1.0281);">Φº:</span>
<span class="t" style="left:1583.0px;top:730.8px;font-size:18.5px;color:#000;transform:scaleX(0.9421);">Secciones Estándar</span>
<div class="tabp" style="left:1441px;top:779px;width:439px;height:128px;background:#fff"></div>
<div class="tabi" style="left:1517px;top:757px;width:84px;height:23px"></div>
<div class="tab" style="left:1441px;top:754px;width:78px;height:27px"></div>
<span class="t" style="left:1449.5px;top:759.6px;font-size:13.5px;color:#000;transform:scaleX(0.9783);">Cuadrada</span>
<span class="t" style="left:1523.0px;top:761.6px;font-size:13.5px;color:#000;transform:scaleX(0.9892);">Rectangular</span>
<div class="abs" style="left:1445px;top:784px;width:433px;height:120px;box-sizing:border-box;border:1px solid #828790;background:#fff"></div>
<div class="abs" style="left:1447px;top:786px;width:428px;height:16.500px;background:#0078d7"></div>
<span class="t" style="left:1450.0px;top:788.1px;font-size:13.5px;color:#fff;transform:scaleX(0.9943);">300x300</span>
<span class="t" style="left:1450.0px;top:804.4px;font-size:13.5px;color:#000;transform:scaleX(0.9943);">350x350</span>
<span class="t" style="left:1450.0px;top:820.7px;font-size:13.5px;color:#000;transform:scaleX(0.9943);">400x400</span>
<span class="t" style="left:1450.0px;top:837.0px;font-size:13.5px;color:#000;transform:scaleX(0.9943);">450x450</span>
<span class="t" style="left:1450.0px;top:853.3px;font-size:13.5px;color:#000;transform:scaleX(0.9943);">500x500</span>
<span class="t" style="left:1450.0px;top:869.6px;font-size:13.5px;color:#000;transform:scaleX(0.9943);">600x600</span>
<span class="t" style="left:1450.0px;top:885.9px;font-size:13.5px;color:#000;transform:scaleX(0.9943);">750x750</span>
<div class="pill" style="left:1444px;top:937px;width:434px;height:30px"></div>
<span class="t" style="left:1562.7px;top:944.4px;font-size:19px;color:#000;font-weight:bold;transform:scaleX(0.9835);">Condiciones de Borde</span>
<div class="circ" style="left:1850px;top:940.0px"></div>
<svg class="ico" style="left:1849.5px;top:939.5px" width="24" height="24" viewBox="-12 -12 24 24"><path d="M-5.500 -3.500H5.500L0 4.500Z" fill="#000"/></svg>
<div class="abs" style="left:1436px;top:975px;width:450px;height:27px;overflow:hidden">
<div class="pill" style="left:8px;top:10px;width:434px;height:30px"></div>
<span class="t" style="left:178.0px;top:17.1px;font-size:19px;color:#000;font-weight:bold;transform:scaleX(1.0276);">Materiales</span>
<div class="circ" style="left:414px;top:13px"></div>
<svg class="ico" style="left:413.5px;top:12.5px" width="24" height="24" viewBox="-12 -12 24 24"><path d="M-5.500 -3.500H5.500L0 4.500Z" fill="#000"/></svg>
</div>
<div id="status"></div>
<span class="t" style="left:2.5px;top:1010.4px;font-size:15px;color:#000;transform:scaleX(0.9035);white-space:pre;">X: 8250  Y: 13900</span>
</div></body></html>
